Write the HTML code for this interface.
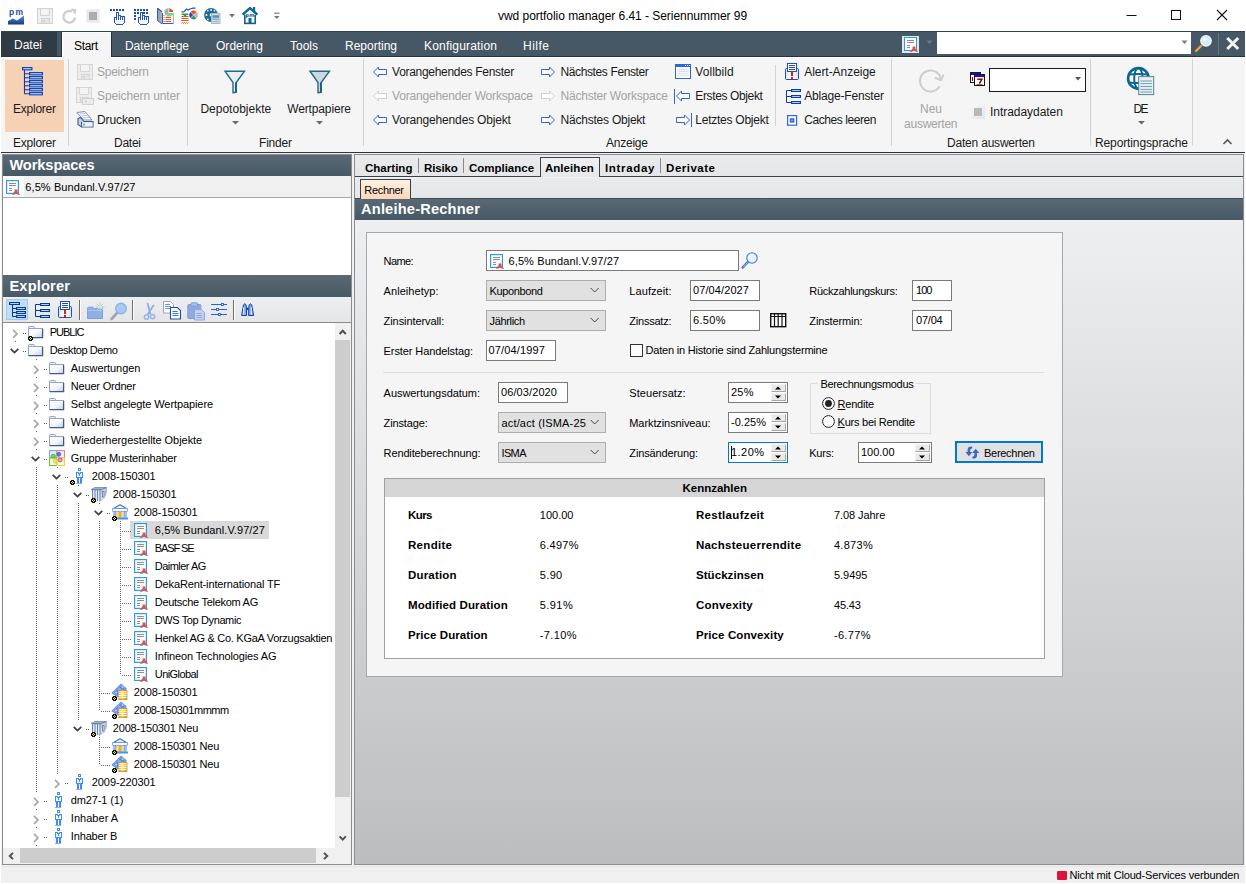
<!DOCTYPE html>
<html lang="de"><head><meta charset="utf-8"><title>vwd portfolio manager 6.41</title>
<style>
html,body{margin:0;padding:0}
body{width:1246px;height:884px;overflow:hidden;background:#f0f0f0;position:relative;
 font-family:"Liberation Sans",sans-serif;font-size:11px;color:#000}
.t{position:absolute;white-space:nowrap;display:block}
svg{display:block;overflow:visible}
</style></head>
<body>
<div id="titlebar"><div style="position:absolute;left:0px;top:0px;width:1246px;height:31px;background:#fff"></div><span class="t" style="left:498px;top:7.5px;height:16px;line-height:16px;font-size:12px;font-weight:400;color:#000;letter-spacing:-0.04px;">vwd portfolio manager 6.41 - Seriennummer 99</span><svg style="position:absolute;left:1125px;top:9px;" width="14" height="14" viewBox="0 0 14 14"><path d="M1.5 6.5h10" stroke="#111" stroke-width="1"/></svg><svg style="position:absolute;left:1170px;top:9px;" width="14" height="14" viewBox="0 0 14 14"><rect x="1.5" y="1.5" width="9" height="9" fill="none" stroke="#111" stroke-width="1"/></svg><svg style="position:absolute;left:1216px;top:9px;" width="14" height="14" viewBox="0 0 14 14"><path d="M1 1l10 10M11 1L1 11" stroke="#111" stroke-width="1.1"/></svg></div>
<div id="menubar"><div style="position:absolute;left:1px;top:31px;width:1244px;height:26px;background:#465866"></div><div style="position:absolute;left:1px;top:31px;width:56px;height:26px;background:#2f3b45"></div><div style="position:absolute;left:1px;top:31px;width:1244px;height:1px;background:#334450"></div><div style="position:absolute;left:1px;top:56px;width:1244px;height:1px;background:#25323a"></div><div style="position:absolute;left:61px;top:32px;width:1px;height:25px;background:#26323a"></div><div style="position:absolute;left:111px;top:32px;width:1px;height:25px;background:#26323a"></div><div style="position:absolute;left:62px;top:32px;width:49px;height:25px;background:#f5f5f5;border-top:1px solid #fff;border-left:1px solid #fff;box-sizing:border-box"></div><span class="t" style="left:14px;top:36.6px;height:16px;line-height:16px;font-size:12px;font-weight:400;color:#ffffff;letter-spacing:-0.00px;">Datei</span><span class="t" style="left:74px;top:38px;height:16px;line-height:16px;font-size:12px;font-weight:400;color:#000;letter-spacing:-0.34px;">Start</span><span class="t" style="left:125px;top:38px;height:16px;line-height:16px;font-size:12px;font-weight:400;color:#ffffff;letter-spacing:-0.07px;">Datenpflege</span><span class="t" style="left:216px;top:38px;height:16px;line-height:16px;font-size:12px;font-weight:400;color:#ffffff;letter-spacing:0.04px;">Ordering</span><span class="t" style="left:290px;top:38px;height:16px;line-height:16px;font-size:12px;font-weight:400;color:#ffffff;letter-spacing:-0.00px;">Tools</span><span class="t" style="left:345px;top:38px;height:16px;line-height:16px;font-size:12px;font-weight:400;color:#ffffff;letter-spacing:-0.00px;">Reporting</span><span class="t" style="left:424px;top:38px;height:16px;line-height:16px;font-size:12px;font-weight:400;color:#ffffff;letter-spacing:0.19px;">Konfiguration</span><span class="t" style="left:523px;top:38px;height:16px;line-height:16px;font-size:12px;font-weight:400;color:#ffffff;letter-spacing:0.50px;">Hilfe</span><div style="position:absolute;left:937px;top:32px;width:254px;height:22px;background:#fff"></div><svg style="position:absolute;left:1181px;top:40px;" width="8" height="5" viewBox="0 0 8 5"><path d="M0.5 0.5h6l-3 3.5z" fill="#7a7a7a"/></svg><svg style="position:absolute;left:926px;top:40px;" width="8" height="5" viewBox="0 0 8 5"><path d="M0.5 0.5h6l-3 3.5z" fill="#6d7a84"/></svg><div style="position:absolute;left:1218px;top:33px;width:1px;height:22px;background:#6a7780"></div><svg style="position:absolute;left:1225px;top:36px;" width="15" height="15" viewBox="0 0 15 15"><path d="M2.2 2l11 11M13.2 2L2.2 13" stroke="#f4f4f4" stroke-width="3"/></svg></div>
<div id="ribbon"><div style="position:absolute;left:1px;top:57px;width:1244px;height:95px;background:#f5f5f5"></div><div style="position:absolute;left:1px;top:57px;width:61px;height:1px;background:#fdfdfd"></div><div style="position:absolute;left:111px;top:57px;width:1134px;height:1px;background:#fdfdfd"></div><div style="position:absolute;left:1px;top:152px;width:1244px;height:1px;background:#2b3841"></div><div style="position:absolute;left:5px;top:60px;width:59px;height:72px;background:#f5d1b6"></div><div style="position:absolute;left:68px;top:59px;width:1px;height:87px;background:#d2d3d4"></div><div style="position:absolute;left:187px;top:59px;width:1px;height:87px;background:#d2d3d4"></div><div style="position:absolute;left:363px;top:59px;width:1px;height:87px;background:#d2d3d4"></div><div style="position:absolute;left:891px;top:59px;width:1px;height:87px;background:#d2d3d4"></div><div style="position:absolute;left:1090px;top:59px;width:1px;height:87px;background:#d2d3d4"></div><div style="position:absolute;left:1192px;top:59px;width:1px;height:87px;background:#d2d3d4"></div><div style="position:absolute;left:775px;top:65px;width:1px;height:61px;background:#d2d3d4"></div><span class="t" style="left:13px;top:134.8px;height:16px;line-height:16px;font-size:12px;font-weight:400;color:#1a1a1a;letter-spacing:-0.24px;">Explorer</span><span class="t" style="left:114px;top:134.8px;height:16px;line-height:16px;font-size:12px;font-weight:400;color:#1a1a1a;letter-spacing:-0.25px;">Datei</span><span class="t" style="left:259px;top:134.8px;height:16px;line-height:16px;font-size:12px;font-weight:400;color:#1a1a1a;letter-spacing:-0.20px;">Finder</span><span class="t" style="left:606px;top:134.8px;height:16px;line-height:16px;font-size:12px;font-weight:400;color:#1a1a1a;letter-spacing:-0.23px;">Anzeige</span><span class="t" style="left:947px;top:134.8px;height:16px;line-height:16px;font-size:12px;font-weight:400;color:#1a1a1a;letter-spacing:-0.20px;">Daten auswerten</span><span class="t" style="left:1095px;top:134.8px;height:16px;line-height:16px;font-size:12px;font-weight:400;color:#1a1a1a;letter-spacing:-0.12px;">Reportingsprache</span><span class="t" style="left:13px;top:100.7px;height:16px;line-height:16px;font-size:12px;font-weight:400;color:#1a1a1a;letter-spacing:-0.24px;">Explorer</span><span class="t" style="left:97px;top:63.6px;height:16px;line-height:16px;font-size:12px;font-weight:400;color:#a3a3a3;letter-spacing:-0.26px;">Speichern</span><span class="t" style="left:97px;top:87.6px;height:16px;line-height:16px;font-size:12px;font-weight:400;color:#a3a3a3;letter-spacing:-0.12px;">Speichern unter</span><span class="t" style="left:97px;top:111.6px;height:16px;line-height:16px;font-size:12px;font-weight:400;color:#1a1a1a;letter-spacing:-0.11px;">Drucken</span><span class="t" style="left:200.4px;top:100.5px;height:16px;line-height:16px;font-size:12px;font-weight:400;color:#1a1a1a;letter-spacing:0.01px;">Depotobjekte</span><span class="t" style="left:287.2px;top:100.5px;height:16px;line-height:16px;font-size:12px;font-weight:400;color:#1a1a1a;letter-spacing:-0.13px;">Wertpapiere</span><svg style="position:absolute;left:231.5px;top:121px;" width="7" height="4" viewBox="0 0 7 4"><path d="M0 0h7l-3.5 3.5z" fill="#6a6a6a"/></svg><svg style="position:absolute;left:315.5px;top:121px;" width="7" height="4" viewBox="0 0 7 4"><path d="M0 0h7l-3.5 3.5z" fill="#6a6a6a"/></svg><span class="t" style="left:392.1px;top:63.6px;height:16px;line-height:16px;font-size:12px;font-weight:400;color:#1a1a1a;letter-spacing:-0.30px;">Vorangehendes Fenster</span><span class="t" style="left:392.1px;top:87.6px;height:16px;line-height:16px;font-size:12px;font-weight:400;color:#a3a3a3;letter-spacing:-0.20px;">Vorangehender Workspace</span><span class="t" style="left:392.1px;top:111.6px;height:16px;line-height:16px;font-size:12px;font-weight:400;color:#1a1a1a;letter-spacing:-0.17px;">Vorangehendes Objekt</span><span class="t" style="left:560.5px;top:63.6px;height:16px;line-height:16px;font-size:12px;font-weight:400;color:#1a1a1a;letter-spacing:-0.38px;">Nächstes Fenster</span><span class="t" style="left:560.5px;top:87.6px;height:16px;line-height:16px;font-size:12px;font-weight:400;color:#a3a3a3;letter-spacing:-0.22px;">Nächster Workspace</span><span class="t" style="left:560.5px;top:111.6px;height:16px;line-height:16px;font-size:12px;font-weight:400;color:#1a1a1a;letter-spacing:-0.22px;">Nächstes Objekt</span><span class="t" style="left:695.3px;top:63.6px;height:16px;line-height:16px;font-size:12px;font-weight:400;color:#1a1a1a;letter-spacing:0.05px;">Vollbild</span><span class="t" style="left:695.3px;top:87.6px;height:16px;line-height:16px;font-size:12px;font-weight:400;color:#1a1a1a;letter-spacing:-0.37px;">Erstes Objekt</span><span class="t" style="left:695.3px;top:111.6px;height:16px;line-height:16px;font-size:12px;font-weight:400;color:#1a1a1a;letter-spacing:-0.25px;">Letztes Objekt</span><span class="t" style="left:804.2px;top:63.6px;height:16px;line-height:16px;font-size:12px;font-weight:400;color:#1a1a1a;letter-spacing:-0.04px;">Alert-Anzeige</span><span class="t" style="left:804.2px;top:87.6px;height:16px;line-height:16px;font-size:12px;font-weight:400;color:#1a1a1a;letter-spacing:-0.17px;">Ablage-Fenster</span><span class="t" style="left:804.2px;top:111.6px;height:16px;line-height:16px;font-size:12px;font-weight:400;color:#1a1a1a;letter-spacing:-0.43px;">Caches leeren</span><span class="t" style="left:920px;top:100.5px;height:16px;line-height:16px;font-size:12px;font-weight:400;color:#a3a3a3;letter-spacing:-0.01px;">Neu</span><span class="t" style="left:904px;top:115.5px;height:16px;line-height:16px;font-size:12px;font-weight:400;color:#a3a3a3;letter-spacing:-0.23px;">auswerten</span><div style="position:absolute;left:989px;top:68px;width:97px;height:24px;background:#fff;border:1px solid #1a1a1a;box-sizing:border-box"></div><svg style="position:absolute;left:1075px;top:77px;" width="7" height="4" viewBox="0 0 7 4"><path d="M0 0h6l-3 3.5z" fill="#555"/></svg><span class="t" style="left:990px;top:104px;height:16px;line-height:16px;font-size:12px;font-weight:400;color:#1a1a1a;letter-spacing:-0.04px;">Intradaydaten</span><span class="t" style="left:1133.5px;top:100.5px;height:16px;line-height:16px;font-size:12px;font-weight:400;color:#1a1a1a;letter-spacing:-1.67px;">DE</span><svg style="position:absolute;left:1138px;top:121px;" width="7" height="4" viewBox="0 0 7 4"><path d="M0 0h7l-3.5 3.5z" fill="#6a6a6a"/></svg><svg style="position:absolute;left:1222px;top:138px;" width="11" height="8" viewBox="0 0 11 8"><path d="M1.5 6L5.5 2l4 4" fill="none" stroke="#555" stroke-width="1.6"/></svg><svg style="position:absolute;left:22px;top:67px;" width="22" height="29" viewBox="0 0 22 29"><path d="M2.5 3V26.7M2.5 6.7H7.5M2.5 10.7H7.5M2.5 14.7H7.5M2.5 18.7H7.5M2.5 22.7H7.5M2.5 26.7H7.5" fill="none" stroke="#0b3bb0" stroke-width="1.1"/><rect x="0.5" y="0.5" width="9.5" height="2.4" fill="#3f8df0" stroke="#0b3bb0" stroke-width="0.9"/><rect x="1.5" y="1.3" width="7.5" height="0.8" fill="#b5dbff"/><rect x="7.5" y="5.5" width="13" height="2.4" fill="#3f8df0" stroke="#0b3bb0" stroke-width="0.9"/><rect x="8.5" y="6.3" width="11" height="0.8" fill="#b5dbff"/><rect x="7.5" y="9.5" width="13" height="2.4" fill="#3f8df0" stroke="#0b3bb0" stroke-width="0.9"/><rect x="8.5" y="10.3" width="11" height="0.8" fill="#b5dbff"/><rect x="7.5" y="13.5" width="13" height="2.4" fill="#3f8df0" stroke="#0b3bb0" stroke-width="0.9"/><rect x="8.5" y="14.3" width="11" height="0.8" fill="#b5dbff"/><rect x="7.5" y="17.5" width="13" height="2.4" fill="#3f8df0" stroke="#0b3bb0" stroke-width="0.9"/><rect x="8.5" y="18.3" width="11" height="0.8" fill="#b5dbff"/><rect x="7.5" y="21.5" width="13" height="2.4" fill="#3f8df0" stroke="#0b3bb0" stroke-width="0.9"/><rect x="8.5" y="22.3" width="11" height="0.8" fill="#b5dbff"/><rect x="7.5" y="25.5" width="13" height="2.4" fill="#3f8df0" stroke="#0b3bb0" stroke-width="0.9"/><rect x="8.5" y="26.3" width="11" height="0.8" fill="#b5dbff"/></svg><svg style="position:absolute;left:77px;top:64px;" width="17" height="17" viewBox="0 0 17 17"><g transform="translate(0 0)"><rect x="0.5" y="0.5" width="15" height="15" fill="#ededed" stroke="#d6d6d6"/>
<rect x="3.5" y="0.5" width="9" height="7" fill="#f4f4f4" stroke="#d6d6d6"/>
<rect x="4.5" y="10.5" width="8" height="5" fill="#e6e6e6" stroke="#d6d6d6"/><rect x="6" y="12" width="2" height="2.5" fill="#d6d6d6"/></g></svg><svg style="position:absolute;left:76px;top:87px;" width="19" height="19" viewBox="0 0 19 19"><g transform="translate(0 0)"><rect x="0.5" y="0.5" width="15" height="15" fill="#ededed" stroke="#d6d6d6"/>
<rect x="3.5" y="0.5" width="9" height="7" fill="#f4f4f4" stroke="#d6d6d6"/>
<rect x="4.5" y="10.5" width="8" height="5" fill="#e6e6e6" stroke="#d6d6d6"/><rect x="6" y="12" width="2" height="2.5" fill="#d6d6d6"/></g><rect x="6.5" y="11.5" width="11" height="6" fill="#ececec" stroke="#d0d0d0"/><rect x="9" y="13.5" width="2" height="2" fill="#d0d0d0"/></svg><svg style="position:absolute;left:76px;top:111px;" width="19" height="18" viewBox="0 0 19 18">
<path d="M1 1.5L9 0.5L16 9H7.5z" fill="#fff" stroke="#7b8fb8" stroke-width="1"/>
<path d="M4 3L9.5 2.4M5.5 5L11.5 4.4M7 7L13 6.4" stroke="#b7c3dc" stroke-width="1"/>
<path d="M2 7.5L4.5 6.5L8 10.5H17v5.5H5.5L2 13.5z" fill="#c7d3e8" stroke="#3d5c9a" stroke-width="1.1"/>
<path d="M5.5 10.8V16" stroke="#3d5c9a" stroke-width="1"/>
<rect x="6.5" y="11.5" width="10" height="4" fill="#eef3fb"/>
<rect x="7.5" y="12.5" width="1.2" height="2" fill="#2aa000"/></svg><svg style="position:absolute;left:223px;top:69.5px;" width="24" height="25" viewBox="0 0 24 25">
<path d="M2 1.2H21.5L13.2 12.5V22.3L10 22.8V12.5z" fill="#e9eef2" stroke="#1e6a92" stroke-width="1.4" stroke-linejoin="miter"/>
<path d="M12.9 12.5V22.3" stroke="#1e5f86" stroke-width="1.8"/></svg><svg style="position:absolute;left:307.5px;top:69.5px;" width="24" height="25" viewBox="0 0 24 25">
<path d="M2 1.2H21.5L13.2 12.5V22.3L10 22.8V12.5z" fill="#d3d6da" stroke="#1e6a92" stroke-width="1.4" stroke-linejoin="miter"/>
<path d="M12.9 12.5V22.3" stroke="#1e5f86" stroke-width="1.8"/></svg><svg style="position:absolute;left:373px;top:66px;" width="14" height="12" viewBox="0 0 14 12"><path d="M0.5 6L5.5 1V3.5H13.5V8.5H5.5V11z" fill="#fff" stroke="#2f66d8" stroke-width="1" stroke-linejoin="miter"/></svg><svg style="position:absolute;left:373px;top:90px;" width="14" height="12" viewBox="0 0 14 12"><path d="M0.5 6L5.5 1V3.5H13.5V8.5H5.5V11z" fill="#fff" stroke="#cfcfcf" stroke-width="1" stroke-linejoin="miter"/></svg><svg style="position:absolute;left:373px;top:114px;" width="14" height="12" viewBox="0 0 14 12"><path d="M0.5 6L5.5 1V3.5H13.5V8.5H5.5V11z" fill="#fff" stroke="#2f66d8" stroke-width="1" stroke-linejoin="miter"/></svg><svg style="position:absolute;left:541px;top:66px;" width="14" height="12" viewBox="0 0 14 12"><path d="M13.5 6L8.5 1V3.5H0.5V8.5H8.5V11z" fill="#fff" stroke="#2f66d8" stroke-width="1" stroke-linejoin="miter"/></svg><svg style="position:absolute;left:541px;top:90px;" width="14" height="12" viewBox="0 0 14 12"><path d="M13.5 6L8.5 1V3.5H0.5V8.5H8.5V11z" fill="#fff" stroke="#cfcfcf" stroke-width="1" stroke-linejoin="miter"/></svg><svg style="position:absolute;left:541px;top:114px;" width="14" height="12" viewBox="0 0 14 12"><path d="M13.5 6L8.5 1V3.5H0.5V8.5H8.5V11z" fill="#fff" stroke="#2f66d8" stroke-width="1" stroke-linejoin="miter"/></svg><svg style="position:absolute;left:674px;top:64px;" width="18" height="16" viewBox="0 0 18 16">
<rect x="1.5" y="0.5" width="15" height="14" fill="#fdfdff" stroke="#2f66d8" stroke-width="1"/>
<rect x="1.5" y="0.5" width="15" height="2.5" fill="#2f66d8"/>
<path d="M3.5 5.5h11M3.5 7.5h11M3.5 9.5h11M3.5 11.5h11" stroke="#d5def6" stroke-width="1"/>
<path d="M11 1.5h1M13 1.5h1M15 1.5h1" stroke="#e8eeff" stroke-width="1"/></svg><div style="position:absolute;left:674px;top:89px;width:1px;height:15px;background:#2f66d8"></div><svg style="position:absolute;left:676px;top:90px;" width="14" height="12" viewBox="0 0 14 12"><path d="M0.5 6L5.5 1V3.5H13.5V8.5H5.5V11z" fill="#fff" stroke="#2f66d8" stroke-width="1" stroke-linejoin="miter"/></svg><svg style="position:absolute;left:676px;top:114px;" width="14" height="12" viewBox="0 0 14 12"><path d="M13.5 6L8.5 1V3.5H0.5V8.5H8.5V11z" fill="#fff" stroke="#2f66d8" stroke-width="1" stroke-linejoin="miter"/></svg><div style="position:absolute;left:691px;top:113px;width:1px;height:14px;background:#2f66d8"></div><svg style="position:absolute;left:785px;top:63px;" width="14" height="17" viewBox="0 0 14 17">
<rect x="0.5" y="5.5" width="13" height="11" rx="1" fill="#dfe8f8" stroke="#1f4fae" stroke-width="1"/>
<rect x="2.5" y="0.5" width="9" height="8" fill="#fff" stroke="#1f4fae" stroke-width="1"/>
<path d="M4 2.5h6M4 4.5h6M4 6.5h6" stroke="#1f4fae" stroke-width="1"/>
<rect x="3" y="9" width="8" height="7" fill="#f7f7f7"/>
<rect x="6" y="9" width="2" height="4" fill="#f01414"/><rect x="6" y="14" width="2" height="2" fill="#f01414"/></svg><svg style="position:absolute;left:786px;top:89px;" width="15" height="15" viewBox="0 0 15 15"><path d="M5 1.5H0.5V13.5H5M0.5 7.5H5" fill="none" stroke="#0b3bb0" stroke-width="1"/><rect x="5.5" y="0.5" width="9" height="2" fill="#5a9ff2" stroke="#0b3bb0" stroke-width="1"/><rect x="6.5" y="1.1" width="7" height="0.8" fill="#c2e0ff"/><rect x="5.5" y="6.5" width="9" height="2" fill="#5a9ff2" stroke="#0b3bb0" stroke-width="1"/><rect x="6.5" y="7.1" width="7" height="0.8" fill="#c2e0ff"/><rect x="5.5" y="12.5" width="9" height="2" fill="#5a9ff2" stroke="#0b3bb0" stroke-width="1"/><rect x="6.5" y="13.1" width="7" height="0.8" fill="#c2e0ff"/></svg><svg style="position:absolute;left:786px;top:114px;" width="12" height="13" viewBox="0 0 12 13"><rect x="1.6" y="1.6" width="9" height="9.6" fill="#fff" stroke="#2f66d8" stroke-width="1.2"/><rect x="3.8" y="4.2" width="4.6" height="4.4" fill="#2f66d8"/><rect x="5" y="5.6" width="2.2" height="1.2" fill="#8fb0f0"/></svg><svg style="position:absolute;left:918px;top:69px;" width="28" height="26" viewBox="0 0 28 26">
<path d="M21.6 17.25A10.5 10.5 0 1 1 23 11.1" fill="none" stroke="#cdcdcd" stroke-width="2"/>
<path d="M16.8 8.6L23 11.1L25.6 5.3" fill="none" stroke="#cdcdcd" stroke-width="2"/></svg><svg style="position:absolute;left:970px;top:72px;" width="17" height="15" viewBox="0 0 17 15">
<rect x="0.5" y="0.5" width="10" height="10" fill="#fff" stroke="#111"/><rect x="0.5" y="0.5" width="10" height="2.5" fill="#1a1a8c"/>
<rect x="4.5" y="2.5" width="10" height="11" fill="#fff" stroke="#111"/><rect x="4.5" y="2.5" width="10" height="2.6" fill="#1a1a8c"/>
<path d="M7.3 7.3h4.6l-2.6 4.2" fill="none" stroke="#a00000" stroke-width="1.5"/><path d="M6.5 12.5h6" stroke="#555" stroke-width="0.8"/>
<path d="M2.5 5v4" stroke="#a00000" stroke-width="1.2"/></svg><div style="position:absolute;left:971px;top:105px;width:14px;height:14px;background:linear-gradient(135deg,#f7f8fb,#e2e5ee)"></div><div style="position:absolute;left:974px;top:108px;width:8px;height:8px;background:#b9b9b9"></div><svg style="position:absolute;left:1126px;top:66px;" width="30" height="30" viewBox="0 0 30 30">
<circle cx="12.4" cy="12.4" r="10.3" fill="#fff" stroke="#0b6693" stroke-width="2.6"/>
<ellipse cx="12.4" cy="12.4" rx="4.2" ry="10.3" fill="none" stroke="#0b6693" stroke-width="2"/>
<path d="M3 8.6Q12.4 7.4 21.8 8.6M3 16.4Q12.4 17.6 21.8 16.4" fill="none" stroke="#0b6693" stroke-width="2"/>
<rect x="12.7" y="10.6" width="15" height="18" fill="#e9eeee" stroke="#5a8096" stroke-width="1"/>
<path d="M14.5 15h11.5M14.5 26h11.5" stroke="#a9c6d4" stroke-width="1.8"/>
<path d="M14.5 17.6h11.5M14.5 20.5h11.5M14.5 23.4h11.5" stroke="#6f9fb8" stroke-width="1"/></svg><div style="position:absolute;left:902px;top:36px;width:17px;height:17px;background:#dfe6ec"></div><svg style="position:absolute;left:904px;top:37px;" width="15" height="16" viewBox="0 0 15 16">
<rect x="0.5" y="0.5" width="12" height="13" fill="#fbfcfe" stroke="#2f9bd8"/>
<path d="M3 3.5h7M3 5.5h7M3 8.5h3M3 10.5h3" stroke="#8f8f8f"/>
<path d="M8.6 9.6h2.8v2l2.8 3.2h-2.4l-1.8-2-1.8 2H5.8l2.8-3.2z" fill="#d9534f"/></svg><svg style="position:absolute;left:1194px;top:34px;" width="20" height="20" viewBox="0 0 20 20">
<path d="M7 12L2 17" stroke="#eda23c" stroke-width="2.4" stroke-linecap="round"/>
<circle cx="12" cy="6.8" r="5.2" fill="#d4ecff" stroke="#eef4fa" stroke-width="1.4"/>
<circle cx="10.6" cy="5.4" r="1.8" fill="#fff"/></svg></div>
<div id="title-icons"><span class="t" style="left:9px;top:7px;height:10px;line-height:10px;font-size:8.5px;font-weight:700;color:#1c4e9c;letter-spacing:1.25px;">pm</span><svg style="position:absolute;left:8px;top:15px;" width="17" height="10" viewBox="0 0 17 10"><defs><linearGradient id="pmg" x1="0" y1="0" x2="0" y2="1"><stop offset="0" stop-color="#5d8fd4"/><stop offset="1" stop-color="#0d3a8a"/></linearGradient></defs><path d="M0 9.5V6L5 3.5L9 5.5L16 0.5V9.5z" fill="url(#pmg)"/></svg><svg style="position:absolute;left:37px;top:8px;" width="17" height="17" viewBox="0 0 17 17"><g transform="translate(0 0)"><rect x="0.5" y="0.5" width="15" height="15" fill="#f0f0f0" stroke="#d2d2d2"/>
<rect x="3.5" y="0.5" width="9" height="7" fill="#f4f4f4" stroke="#d2d2d2"/>
<rect x="4.5" y="10.5" width="8" height="5" fill="#e6e6e6" stroke="#d2d2d2"/><rect x="6" y="12" width="2" height="2.5" fill="#d2d2d2"/></g></svg><svg style="position:absolute;left:61px;top:8px;" width="17" height="17" viewBox="0 0 17 17">
<path d="M14 9.5A5.8 5.8 0 1 1 10.8 3.6" fill="none" stroke="#cfcfcf" stroke-width="2.4"/>
<path d="M9.5 0.5L15.5 1L14.5 7z" fill="#cfcfcf"/></svg><div style="position:absolute;left:86px;top:9px;width:14px;height:14px;background:#e8e9f0;border:1px solid #f1f2f7;box-sizing:border-box"></div><div style="position:absolute;left:89px;top:12px;width:8px;height:8px;background:#adadad"></div><svg style="position:absolute;left:110px;top:8px;shape-rendering:crispEdges" width="16" height="18" viewBox="0 0 16 18"><rect x="0" y="1" width="2" height="2" fill="#1b4fa8"/><rect x="3" y="1" width="2" height="2" fill="#1b4fa8"/><rect x="6" y="1" width="2" height="2" fill="#1b4fa8"/><rect x="9" y="1" width="2" height="2" fill="#1b4fa8"/><rect x="12" y="1" width="2" height="2" fill="#1b4fa8"/><g transform="translate(6 4)"><path d="M0.5 8V0.5H2.5V3.5H4.5V4.5H6.5V4.5H8.5V10.5L6.5 12.5H0.5L-1.5 10.5V5.5H0.5" fill="#f3f6fb" stroke="#2458b0" stroke-width="1" stroke-linejoin="miter"/><path d="M2.5 3.5V7.5M4.5 4.5V7.5M6.5 4.5V7.5" stroke="#2458b0" stroke-width="1"/></g></svg><svg style="position:absolute;left:134px;top:8px;shape-rendering:crispEdges" width="16" height="18" viewBox="0 0 16 18"><rect x="0" y="1" width="2" height="2" fill="#1b4fa8"/><rect x="3" y="1" width="2" height="2" fill="#1b4fa8"/><rect x="6" y="1" width="2" height="2" fill="#1b4fa8"/><rect x="9" y="1" width="2" height="2" fill="#1b4fa8"/><rect x="12" y="1" width="2" height="2" fill="#1b4fa8"/><rect x="0" y="4" width="2" height="2" fill="#1b4fa8"/><rect x="3" y="4" width="2" height="2" fill="#1b4fa8"/><rect x="9" y="4" width="2" height="2" fill="#1b4fa8"/><rect x="12" y="4" width="2" height="2" fill="#1b4fa8"/><rect x="0" y="7" width="2" height="2" fill="#1b4fa8"/><rect x="0" y="10" width="2" height="2" fill="#1b4fa8"/><g transform="translate(6 4)"><path d="M0.5 8V0.5H2.5V3.5H4.5V4.5H6.5V4.5H8.5V10.5L6.5 12.5H0.5L-1.5 10.5V5.5H0.5" fill="#f3f6fb" stroke="#2458b0" stroke-width="1" stroke-linejoin="miter"/><path d="M2.5 3.5V7.5M4.5 4.5V7.5M6.5 4.5V7.5" stroke="#2458b0" stroke-width="1"/></g></svg><svg style="position:absolute;left:157px;top:7px;" width="17" height="18" viewBox="0 0 17 18">
<defs><linearGradient id="rpg" x1="0" y1="0" x2="1" y2="0"><stop offset="0" stop-color="#8f9aa6"/><stop offset="1" stop-color="#b4b4b0"/></linearGradient></defs>
<path d="M0.5 1.2L5 4.8V17L0.5 13.6z" fill="url(#rpg)"/>
<path d="M0.5 1.2V13.6L5 17" fill="none" stroke="#2a5fd0" stroke-width="1"/>
<path d="M0.5 1.2L5 4.8" stroke="#2a5fd0" stroke-width="1.2"/>
<rect x="5" y="5" width="11" height="12" fill="#fff"/>
<path d="M5.5 6V16.5H16" fill="none" stroke="#2a5fd0" stroke-width="1"/>
<path d="M16.3 6V17" stroke="#9a9a9a" stroke-width="0.9"/>
<path d="M8.5 10.5h5.5M8.5 12.5h5.5M8.5 14.5h5.5" stroke="#e8551c" stroke-width="1.2"/>
<path d="M6.5 8.5h1M6.5 10.5h1M6.5 12.5h1M6.5 14.5h1" stroke="#e8551c" stroke-width="1"/>
<path d="M7.5 3L11.5 0.8V6.5L8.5 8.5L7.5 6z" fill="#a9aea8"/>
<path d="M12.3 1L16 3.5V5H12.3z" fill="#e8481c"/>
<path d="M11 6L16 5.8V7.5L13.5 9.5H9z" fill="#6fd898"/></svg><svg style="position:absolute;left:181px;top:7px;" width="18" height="18" viewBox="0 0 18 18">
<path d="M0.5 5.2L3 4.6L5.5 2L7 3L9 2L12 1.2H14.5" fill="none" stroke="#2352c8" stroke-width="1.2"/>
<path d="M0.5 7.5h7M0.5 9.5h7M0.5 11.5h7M0.5 13.5h7" stroke="#e8551c" stroke-width="1.1"/>
<path d="M0.7 6.5H7.2L4 10z" fill="#2aa34a"/>
<path d="M0.5 16.5l1-1.2 1 1.2 1-1.2 1 1.2 1-1.2 1 1.2 0.8-1" fill="none" stroke="#e8551c" stroke-width="0.9"/>
<circle cx="12.6" cy="8" r="4.3" fill="#b9b9b9"/>
<path d="M12.6 8L9.6 4.9A4.3 4.3 0 0 1 15.6 4.9z" fill="#e8501c"/>
<path d="M12.6 8L9.6 11.1A4.3 4.3 0 0 0 15.6 11.1z" fill="#2aa05a"/>
<path d="M12.6 8L9.6 4.9A4.3 4.3 0 0 0 9.6 11.1z" fill="#3a3ad8"/>
<path d="M9.8 5.1L15.4 10.9M15.4 5.1L9.8 10.9" stroke="#f4f4f4" stroke-width="0.7"/></svg><svg style="position:absolute;left:204px;top:7px;" width="17" height="18" viewBox="0 0 17 18">
<circle cx="7" cy="8" r="6.9" fill="#1e6a92"/>
<g fill="#eaf2f6"><rect x="3" y="3" width="1.6" height="1.6" rx="0.5"/><rect x="6.2" y="2" width="1.8" height="1.8" rx="0.5"/><rect x="9.6" y="3" width="1.6" height="1.6" rx="0.5"/>
<rect x="1.6" y="7" width="1.8" height="2" rx="0.5"/><rect x="5.8" y="6.6" width="2.4" height="2.6" rx="0.5"/>
<rect x="3" y="11.6" width="1.6" height="1.6" rx="0.5"/></g>
<rect x="7.5" y="6.5" width="8.5" height="10" fill="#cfdde6" stroke="#a7bdca" stroke-width="1"/>
<path d="M8.5 8.8h6.5M8.5 10h6.5" stroke="#5f8fae" stroke-width="1.3"/>
<path d="M8.5 12.2h6.5" stroke="#7ba3bd" stroke-width="1.2"/>
<path d="M8.5 14.6h6.5" stroke="#9fbccd" stroke-width="1.1"/></svg><svg style="position:absolute;left:229px;top:14px;" width="6" height="4" viewBox="0 0 6 4"><path d="M0 0h6L3 3.5z" fill="#777"/></svg><svg style="position:absolute;left:241px;top:6px;" width="18" height="19" viewBox="0 0 18 19">
<rect x="3.8" y="8" width="10.4" height="9.4" fill="#fff" stroke="#0b6693" stroke-width="1.6"/>
<path d="M9 2.8L2.5 8.8H15.5z" fill="#fff"/>
<path d="M1.6 8.6L9 2L16.4 8.6" fill="none" stroke="#0b6693" stroke-width="2.4" stroke-linejoin="miter"/>
<rect x="12" y="1" width="2.2" height="4.5" fill="#0b6693"/>
<rect x="7.5" y="12" width="3" height="5.6" fill="#0b6693"/>
<path d="M5.3 12V8.8H7.2V10.6H5.3M9 11V8.8H12.8V11M10.9 8.8V11" fill="none" stroke="#0b6693" stroke-width="0.9"/></svg><svg style="position:absolute;left:274px;top:12px;" width="6" height="8" viewBox="0 0 6 8"><path d="M0 1.2h5.6" stroke="#777" stroke-width="1.1"/><path d="M0 4h5.6L2.8 7z" fill="#777"/></svg></div>
<div id="explorer-panel"><div style="position:absolute;left:2px;top:154px;width:350px;height:711px;background:#fff;border:1px solid #8c8c8c;box-sizing:border-box"></div><div style="position:absolute;left:3px;top:155px;width:348px;height:21px;background:linear-gradient(#5a6975,#475966)"></div><span class="t" style="left:9.4px;top:155px;height:20px;line-height:20px;font-size:14.67px;font-weight:700;color:#fff;letter-spacing:-0.10px;">Workspaces</span><div style="position:absolute;left:3px;top:176px;width:348px;height:21px;background:#f0f0f0"></div><div style="position:absolute;left:3px;top:176px;width:21px;height:21px;background:#fbfbfb"></div><div style="position:absolute;left:3px;top:197px;width:348px;height:1px;background:#a8a8a8"></div><svg style="position:absolute;left:6px;top:180px;" width="15" height="16" viewBox="0 0 15 16">
<rect x="0.5" y="0.5" width="12" height="13" fill="#fbfcfe" stroke="#2f9bd8" stroke-width="1"/>
<rect x="1.5" y="1.5" width="10" height="11" fill="none" stroke="#d6eaf8" stroke-width="1"/>
<path d="M3 3.5h7M3 5.5h7M3 8.5h3M3 10.5h3" stroke="#8f8f8f" stroke-width="1"/>
<path d="M8.6 9.6h2.8v2l2.8 3.2h-2.4l-1.8-2-1.8 2H5.8l2.8-3.2z" fill="#d9534f"/></svg><span class="t" style="left:25.3px;top:179px;height:16px;line-height:16px;font-size:11px;font-weight:400;color:#000;letter-spacing:0.09px;">6,5% Bundanl.V.97/27</span><div style="position:absolute;left:3px;top:275px;width:348px;height:22px;background:linear-gradient(#5a6975,#475966)"></div><span class="t" style="left:9.4px;top:276px;height:20px;line-height:20px;font-size:14.67px;font-weight:700;color:#fff;letter-spacing:0.16px;">Explorer</span><div style="position:absolute;left:3px;top:297px;width:348px;height:25px;background:linear-gradient(#edeff0,#e3e5e7)"></div><div style="position:absolute;left:3px;top:322px;width:348px;height:1px;background:#8c8c8c"></div><div style="position:absolute;left:6px;top:299px;width:22px;height:21px;background:#c2dcf3;border:1px solid #98cbf5;box-sizing:border-box"></div><div style="position:absolute;left:79px;top:300px;width:1px;height:20px;background:#6e6e6e"></div><div style="position:absolute;left:80px;top:300px;width:1px;height:20px;background:#fff"></div><div style="position:absolute;left:132px;top:300px;width:1px;height:20px;background:#6e6e6e"></div><div style="position:absolute;left:133px;top:300px;width:1px;height:20px;background:#fff"></div><div style="position:absolute;left:233px;top:300px;width:1px;height:20px;background:#6e6e6e"></div><div style="position:absolute;left:234px;top:300px;width:1px;height:20px;background:#fff"></div><svg style="position:absolute;left:9px;top:302px;" width="17" height="17" viewBox="0 0 17 17"><path d="M3.5 3V14.5H7.5M3.5 6.5H7.5M3.5 10.5H7.5" fill="none" stroke="#0b3a8f" stroke-width="1"/><rect x="0.5" y="0.5" width="10" height="2" fill="#5a9ff2" stroke="#0b3a8f" stroke-width="1"/><rect x="1.5" y="1.1" width="8" height="0.8" fill="#c2e0ff"/><rect x="7.5" y="5.5" width="9" height="2" fill="#5a9ff2" stroke="#0b3a8f" stroke-width="1"/><rect x="8.5" y="6.1" width="7" height="0.8" fill="#c2e0ff"/><rect x="7.5" y="9.5" width="9" height="2" fill="#5a9ff2" stroke="#0b3a8f" stroke-width="1"/><rect x="8.5" y="10.1" width="7" height="0.8" fill="#c2e0ff"/><rect x="7.5" y="13.5" width="9" height="2" fill="#5a9ff2" stroke="#0b3a8f" stroke-width="1"/><rect x="8.5" y="14.1" width="7" height="0.8" fill="#c2e0ff"/></svg><svg style="position:absolute;left:35px;top:303px;" width="15" height="16" viewBox="0 0 15 16"><path d="M5 1.5H0.5V13.5H5M0.5 7.5H5" fill="none" stroke="#0b3a8f" stroke-width="1"/><rect x="5.5" y="0.5" width="9" height="2" fill="#5a9ff2" stroke="#0b3a8f" stroke-width="1"/><rect x="6.5" y="1.1" width="7" height="0.8" fill="#c2e0ff"/><rect x="5.5" y="6.5" width="9" height="2" fill="#5a9ff2" stroke="#0b3a8f" stroke-width="1"/><rect x="6.5" y="7.1" width="7" height="0.8" fill="#c2e0ff"/><rect x="5.5" y="12.5" width="9" height="2" fill="#5a9ff2" stroke="#0b3a8f" stroke-width="1"/><rect x="6.5" y="13.1" width="7" height="0.8" fill="#c2e0ff"/></svg><svg style="position:absolute;left:58px;top:301px;" width="14" height="17" viewBox="0 0 14 17">
<rect x="0.5" y="5.5" width="13" height="11" rx="1" fill="#dfe8f8" stroke="#1f4fae" stroke-width="1"/>
<rect x="2.5" y="0.5" width="9" height="8" fill="#fff" stroke="#1f4fae" stroke-width="1"/>
<path d="M4 2.5h6M4 4.5h6M4 6.5h6" stroke="#1f4fae" stroke-width="1"/>
<rect x="3" y="9" width="8" height="7" fill="#f7f7f7"/>
<rect x="6" y="9" width="2" height="4" fill="#f01414"/><rect x="6" y="14" width="2" height="2" fill="#f01414"/></svg><svg style="position:absolute;left:87px;top:302px;" width="18" height="18" viewBox="0 0 18 18">
<path d="M0.5 6.5Q0.5 5.2 1.8 5.2H6l1.4 1.4H15.5V16.5H0.5z" fill="#8fb0e6" stroke="#7ea0dc"/>
<path d="M0.8 8.5H15.2" stroke="#a9c3ee" stroke-width="1"/>
<path d="M13 0.5V9.5M8.5 5H17.5M9.8 1.8L16.2 8.2M16.2 1.8L9.8 8.2" stroke="#a9cfc6" stroke-width="1"/>
<path d="M13 3V7M11 5H15" stroke="#dff0ea" stroke-width="1"/></svg><svg style="position:absolute;left:110px;top:302px;" width="18" height="19" viewBox="0 0 18 19">
<path d="M7.5 10.5L1.5 17" stroke="#a0a4b4" stroke-width="2.6" stroke-linecap="round"/>
<circle cx="11" cy="6.5" r="5.3" fill="#a9c8f3" stroke="#8eb2ea" stroke-width="1.4"/></svg><svg style="position:absolute;left:142px;top:302px;" width="16" height="19" viewBox="0 0 16 19">
<path d="M5.5 1L8.5 12.5M11.8 3L5.5 12.5" stroke="#8eaae6" stroke-width="1.7"/>
<circle cx="4.6" cy="15" r="2.2" fill="none" stroke="#9ab3ea" stroke-width="1.5"/>
<circle cx="10.6" cy="14.6" r="2.2" fill="none" stroke="#9ab3ea" stroke-width="1.5"/></svg><svg style="position:absolute;left:163px;top:301px;" width="19" height="19" viewBox="0 0 19 19">
<path d="M0.5 0.5h7l3 3v8.5h-10z" fill="#fff" stroke="#9aa6c0"/>
<path d="M2 3.5h5M2 5.5h6M2 7.5h6" stroke="#6f8fd6" stroke-width="1"/>
<path d="M7.5 6.5h7l3 3v8.5h-10z" fill="#fff" stroke="#1f4fae" stroke-width="1.1"/>
<path d="M9.5 10.5h5M9.5 12.5h6M9.5 14.5h6" stroke="#3c72d8" stroke-width="1"/></svg><svg style="position:absolute;left:187px;top:302px;" width="19" height="19" viewBox="0 0 19 19">
<rect x="0.8" y="2.5" width="13" height="14" rx="1" fill="#8fa8e0" stroke="#7f98d6"/>
<rect x="4" y="0.8" width="6.5" height="3.4" rx="1" fill="#a9bdea" stroke="#7f98d6"/>
<path d="M7.5 7.5h7l3 3v7.5h-10z" fill="#c5d3f2" stroke="#90a6de"/>
<path d="M9.5 11.5h5M9.5 13.5h6M9.5 15.5h6" stroke="#8da6e2" stroke-width="1"/></svg><svg style="position:absolute;left:211px;top:302px;" width="17" height="16" viewBox="0 0 17 16">
<path d="M0 2.5h16M0 7.5h16M0 12.5h16" stroke="#2a62d4" stroke-width="1"/>
<rect x="10.5" y="1.5" width="2" height="2" fill="#fff" stroke="#2a62d4" stroke-width="0.9"/>
<rect x="5.5" y="6.5" width="2" height="2" fill="#fff" stroke="#2a62d4" stroke-width="0.9"/>
<rect x="7.5" y="11.5" width="2" height="2" fill="#fff" stroke="#2a62d4" stroke-width="0.9"/></svg><svg style="position:absolute;left:241px;top:303px;" width="14" height="14" viewBox="0 0 14 14">
<path d="M0.6 12.5L2 4.5Q2.2 0.8 3.8 0.8Q5.3 0.8 5.4 4.5L5.6 12.5z" fill="#7db0f2" stroke="#1c3fa0" stroke-width="1"/>
<path d="M7.6 12.5L7.8 4.5Q7.9 0.8 9.4 0.8Q11 0.8 11.2 4.5L12.6 12.5z" fill="#7db0f2" stroke="#1c3fa0" stroke-width="1"/>
<path d="M2.6 4.5v7M10.4 4.5v7" stroke="#e4f0ff" stroke-width="1.1"/>
<rect x="5.6" y="4.5" width="2" height="2.6" fill="#1c3fa0"/></svg><div style="position:absolute;left:130px;top:521px;width:139px;height:18px;background:#d9d9d9"></div><div style="position:absolute;left:15px;top:341px;width:1px;height:1px;background:repeating-linear-gradient(to bottom,#6a6a6a 0 1px,transparent 1px 2px)"></div><div style="position:absolute;left:36px;top:359px;width:1px;height:487px;background:repeating-linear-gradient(to bottom,#6a6a6a 0 1px,transparent 1px 2px)"></div><div style="position:absolute;left:57px;top:467px;width:1px;height:309px;background:repeating-linear-gradient(to bottom,#6a6a6a 0 1px,transparent 1px 2px)"></div><div style="position:absolute;left:78px;top:485px;width:1px;height:238px;background:repeating-linear-gradient(to bottom,#6a6a6a 0 1px,transparent 1px 2px)"></div><div style="position:absolute;left:99px;top:503px;width:1px;height:208px;background:repeating-linear-gradient(to bottom,#6a6a6a 0 1px,transparent 1px 2px)"></div><div style="position:absolute;left:120px;top:521px;width:1px;height:154px;background:repeating-linear-gradient(to bottom,#6a6a6a 0 1px,transparent 1px 2px)"></div><div style="position:absolute;left:99px;top:737px;width:1px;height:28px;background:repeating-linear-gradient(to bottom,#6a6a6a 0 1px,transparent 1px 2px)"></div><div style="position:absolute;left:9px;top:325px;width:13px;height:16px;background:#fff"></div><svg style="position:absolute;left:12px;top:328.5px;" width="7" height="10" viewBox="0 0 7 10"><path d="M1 0.9L5 4.9L1 8.9" fill="none" stroke="#a6a6a6" stroke-width="1.6"/></svg><div style="position:absolute;left:23px;top:333px;width:1px;height:1px;background:#5a5a5a"></div><div style="position:absolute;left:25px;top:333px;width:1px;height:1px;background:#5a5a5a"></div><svg style="position:absolute;left:28px;top:326px;" width="16" height="13" viewBox="0 0 16 13">
<defs><linearGradient id="fg" x1="0" y1="0" x2="1" y2="1"><stop offset="0" stop-color="#ffffff"/><stop offset="0.55" stop-color="#f4f6fa"/><stop offset="1" stop-color="#c3cddd"/></linearGradient></defs>
<path d="M0.5 2.5V1.3Q0.5 0.5 1.3 0.5H5.6Q6.4 0.5 6.5 1.3V2.5" fill="#eef2f8" stroke="#8ea5c4"/>
<rect x="0.5" y="2.5" width="14" height="9" fill="url(#fg)" stroke="#8ea5c4"/>
<path d="M14.6 3v9M0.8 11.7H15.2" stroke="#3d5c88" stroke-width="1.3" fill="none"/></svg><svg style="position:absolute;left:28px;top:336px;shape-rendering:crispEdges" width="5" height="5" viewBox="0 0 5 5">
<path d="M1 0h3v1h1v3h-1v1h-3v-1h-1v-3h1z" fill="#0a0a0a"/>
<path d="M2 1h1v1h1v1h-1v1h-1v-1h-1v-1h1z" fill="#f5ea00"/>
<rect x="2" y="2" width="1" height="1" fill="#2020a0"/></svg><span class="t" style="left:49.8px;top:324px;height:16px;line-height:16px;font-size:11px;font-weight:400;color:#000;letter-spacing:-1.03px;">PUBLIC</span><div style="position:absolute;left:9px;top:343px;width:13px;height:16px;background:#fff"></div><svg style="position:absolute;left:10px;top:348.3px;" width="9" height="6" viewBox="0 0 9 6"><path d="M0.7 0.9L4.5 4.6L8.3 0.9" fill="none" stroke="#404040" stroke-width="1.7"/></svg><div style="position:absolute;left:23px;top:351px;width:1px;height:1px;background:#5a5a5a"></div><div style="position:absolute;left:25px;top:351px;width:1px;height:1px;background:#5a5a5a"></div><svg style="position:absolute;left:28px;top:344px;" width="16" height="13" viewBox="0 0 16 13">
<defs><linearGradient id="fg" x1="0" y1="0" x2="1" y2="1"><stop offset="0" stop-color="#ffffff"/><stop offset="0.55" stop-color="#f4f6fa"/><stop offset="1" stop-color="#c3cddd"/></linearGradient></defs>
<path d="M0.5 2.5V1.3Q0.5 0.5 1.3 0.5H5.6Q6.4 0.5 6.5 1.3V2.5" fill="#eef2f8" stroke="#8ea5c4"/>
<rect x="0.5" y="2.5" width="14" height="9" fill="url(#fg)" stroke="#8ea5c4"/>
<path d="M14.6 3v9M0.8 11.7H15.2" stroke="#3d5c88" stroke-width="1.3" fill="none"/></svg><span class="t" style="left:49.8px;top:342px;height:16px;line-height:16px;font-size:11px;font-weight:400;color:#000;letter-spacing:-0.42px;">Desktop Demo</span><div style="position:absolute;left:30px;top:361px;width:13px;height:16px;background:#fff"></div><svg style="position:absolute;left:33px;top:364.5px;" width="7" height="10" viewBox="0 0 7 10"><path d="M1 0.9L5 4.9L1 8.9" fill="none" stroke="#a6a6a6" stroke-width="1.6"/></svg><div style="position:absolute;left:44px;top:369px;width:1px;height:1px;background:#5a5a5a"></div><div style="position:absolute;left:46px;top:369px;width:1px;height:1px;background:#5a5a5a"></div><svg style="position:absolute;left:49px;top:362px;" width="16" height="13" viewBox="0 0 16 13">
<defs><linearGradient id="fg" x1="0" y1="0" x2="1" y2="1"><stop offset="0" stop-color="#ffffff"/><stop offset="0.55" stop-color="#f4f6fa"/><stop offset="1" stop-color="#c3cddd"/></linearGradient></defs>
<path d="M0.5 2.5V1.3Q0.5 0.5 1.3 0.5H5.6Q6.4 0.5 6.5 1.3V2.5" fill="#eef2f8" stroke="#8ea5c4"/>
<rect x="0.5" y="2.5" width="14" height="9" fill="url(#fg)" stroke="#8ea5c4"/>
<path d="M14.6 3v9M0.8 11.7H15.2" stroke="#3d5c88" stroke-width="1.3" fill="none"/></svg><span class="t" style="left:70.8px;top:360px;height:16px;line-height:16px;font-size:11px;font-weight:400;color:#000;letter-spacing:-0.07px;">Auswertungen</span><div style="position:absolute;left:30px;top:379px;width:13px;height:16px;background:#fff"></div><svg style="position:absolute;left:33px;top:382.5px;" width="7" height="10" viewBox="0 0 7 10"><path d="M1 0.9L5 4.9L1 8.9" fill="none" stroke="#a6a6a6" stroke-width="1.6"/></svg><div style="position:absolute;left:44px;top:387px;width:1px;height:1px;background:#5a5a5a"></div><div style="position:absolute;left:46px;top:387px;width:1px;height:1px;background:#5a5a5a"></div><svg style="position:absolute;left:49px;top:380px;" width="16" height="13" viewBox="0 0 16 13">
<defs><linearGradient id="fg" x1="0" y1="0" x2="1" y2="1"><stop offset="0" stop-color="#ffffff"/><stop offset="0.55" stop-color="#f4f6fa"/><stop offset="1" stop-color="#c3cddd"/></linearGradient></defs>
<path d="M0.5 2.5V1.3Q0.5 0.5 1.3 0.5H5.6Q6.4 0.5 6.5 1.3V2.5" fill="#eef2f8" stroke="#8ea5c4"/>
<rect x="0.5" y="2.5" width="14" height="9" fill="url(#fg)" stroke="#8ea5c4"/>
<path d="M14.6 3v9M0.8 11.7H15.2" stroke="#3d5c88" stroke-width="1.3" fill="none"/></svg><span class="t" style="left:70.8px;top:378px;height:16px;line-height:16px;font-size:11px;font-weight:400;color:#000;letter-spacing:-0.19px;">Neuer Ordner</span><div style="position:absolute;left:30px;top:397px;width:13px;height:16px;background:#fff"></div><svg style="position:absolute;left:33px;top:400.5px;" width="7" height="10" viewBox="0 0 7 10"><path d="M1 0.9L5 4.9L1 8.9" fill="none" stroke="#a6a6a6" stroke-width="1.6"/></svg><div style="position:absolute;left:44px;top:405px;width:1px;height:1px;background:#5a5a5a"></div><div style="position:absolute;left:46px;top:405px;width:1px;height:1px;background:#5a5a5a"></div><svg style="position:absolute;left:49px;top:398px;" width="16" height="13" viewBox="0 0 16 13">
<defs><linearGradient id="fg" x1="0" y1="0" x2="1" y2="1"><stop offset="0" stop-color="#ffffff"/><stop offset="0.55" stop-color="#f4f6fa"/><stop offset="1" stop-color="#c3cddd"/></linearGradient></defs>
<path d="M0.5 2.5V1.3Q0.5 0.5 1.3 0.5H5.6Q6.4 0.5 6.5 1.3V2.5" fill="#eef2f8" stroke="#8ea5c4"/>
<rect x="0.5" y="2.5" width="14" height="9" fill="url(#fg)" stroke="#8ea5c4"/>
<path d="M14.6 3v9M0.8 11.7H15.2" stroke="#3d5c88" stroke-width="1.3" fill="none"/></svg><span class="t" style="left:70.8px;top:396px;height:16px;line-height:16px;font-size:11px;font-weight:400;color:#000;letter-spacing:-0.09px;">Selbst angelegte Wertpapiere</span><div style="position:absolute;left:30px;top:415px;width:13px;height:16px;background:#fff"></div><svg style="position:absolute;left:33px;top:418.5px;" width="7" height="10" viewBox="0 0 7 10"><path d="M1 0.9L5 4.9L1 8.9" fill="none" stroke="#a6a6a6" stroke-width="1.6"/></svg><div style="position:absolute;left:44px;top:423px;width:1px;height:1px;background:#5a5a5a"></div><div style="position:absolute;left:46px;top:423px;width:1px;height:1px;background:#5a5a5a"></div><svg style="position:absolute;left:49px;top:416px;" width="16" height="13" viewBox="0 0 16 13">
<defs><linearGradient id="fg" x1="0" y1="0" x2="1" y2="1"><stop offset="0" stop-color="#ffffff"/><stop offset="0.55" stop-color="#f4f6fa"/><stop offset="1" stop-color="#c3cddd"/></linearGradient></defs>
<path d="M0.5 2.5V1.3Q0.5 0.5 1.3 0.5H5.6Q6.4 0.5 6.5 1.3V2.5" fill="#eef2f8" stroke="#8ea5c4"/>
<rect x="0.5" y="2.5" width="14" height="9" fill="url(#fg)" stroke="#8ea5c4"/>
<path d="M14.6 3v9M0.8 11.7H15.2" stroke="#3d5c88" stroke-width="1.3" fill="none"/></svg><span class="t" style="left:70.8px;top:414px;height:16px;line-height:16px;font-size:11px;font-weight:400;color:#000;letter-spacing:-0.10px;">Watchliste</span><div style="position:absolute;left:30px;top:433px;width:13px;height:16px;background:#fff"></div><svg style="position:absolute;left:33px;top:436.5px;" width="7" height="10" viewBox="0 0 7 10"><path d="M1 0.9L5 4.9L1 8.9" fill="none" stroke="#a6a6a6" stroke-width="1.6"/></svg><div style="position:absolute;left:44px;top:441px;width:1px;height:1px;background:#5a5a5a"></div><div style="position:absolute;left:46px;top:441px;width:1px;height:1px;background:#5a5a5a"></div><svg style="position:absolute;left:49px;top:434px;" width="16" height="13" viewBox="0 0 16 13">
<defs><linearGradient id="fg" x1="0" y1="0" x2="1" y2="1"><stop offset="0" stop-color="#ffffff"/><stop offset="0.55" stop-color="#f4f6fa"/><stop offset="1" stop-color="#c3cddd"/></linearGradient></defs>
<path d="M0.5 2.5V1.3Q0.5 0.5 1.3 0.5H5.6Q6.4 0.5 6.5 1.3V2.5" fill="#eef2f8" stroke="#8ea5c4"/>
<rect x="0.5" y="2.5" width="14" height="9" fill="url(#fg)" stroke="#8ea5c4"/>
<path d="M14.6 3v9M0.8 11.7H15.2" stroke="#3d5c88" stroke-width="1.3" fill="none"/></svg><span class="t" style="left:70.8px;top:432px;height:16px;line-height:16px;font-size:11px;font-weight:400;color:#000;letter-spacing:-0.05px;">Wiederhergestellte Objekte</span><div style="position:absolute;left:30px;top:451px;width:13px;height:16px;background:#fff"></div><svg style="position:absolute;left:31px;top:456.3px;" width="9" height="6" viewBox="0 0 9 6"><path d="M0.7 0.9L4.5 4.6L8.3 0.9" fill="none" stroke="#404040" stroke-width="1.7"/></svg><div style="position:absolute;left:44px;top:459px;width:1px;height:1px;background:#5a5a5a"></div><div style="position:absolute;left:46px;top:459px;width:1px;height:1px;background:#5a5a5a"></div><svg style="position:absolute;left:49px;top:450px;" width="16" height="16" viewBox="0 0 16 16">
<rect x="0.5" y="0.5" width="7.5" height="7.5" fill="#dde9fb" stroke="#7fa8ea"/>
<rect x="8" y="0.5" width="7.5" height="7.5" fill="#f9e8ea" stroke="#d98690"/>
<rect x="0.5" y="8" width="7.5" height="7.5" fill="#f2fbe8" stroke="#6cc02c"/>
<rect x="8" y="8" width="7.5" height="7.5" fill="#fcf7cf" stroke="#e4d648"/>
<path d="M8 3.2h1.2V2.2Q11.6 1.8 11.6 4.2Q11.6 6.6 9.2 6.2V5.2H8z" fill="#4d83e8" stroke="#2d62d6" stroke-width="0.8"/>
<path d="M3 8V6.8H2.2Q1.8 4.2 4.3 4.2Q6.8 4.2 6.4 6.8H5.6V8z" fill="#7fd24a" stroke="#4cb81e" stroke-width="0.8"/>
<path d="M9.8 8v1.2H9Q8.6 11.8 11.1 11.8Q13.6 11.8 13.2 9.2H12.4V8z" fill="#e8a0aa" stroke="#c4566a" stroke-width="0.8"/>
<path d="M8 10h-1.2V9.2Q4.4 8.8 4.4 11.2Q4.4 13.6 6.8 13.2V12.2H8z" fill="#f2e68a" stroke="#d9c62a" stroke-width="0.8"/></svg><span class="t" style="left:70.8px;top:450px;height:16px;line-height:16px;font-size:11px;font-weight:400;color:#000;letter-spacing:-0.21px;">Gruppe Musterinhaber</span><div style="position:absolute;left:51px;top:469px;width:13px;height:16px;background:#fff"></div><svg style="position:absolute;left:52px;top:474.3px;" width="9" height="6" viewBox="0 0 9 6"><path d="M0.7 0.9L4.5 4.6L8.3 0.9" fill="none" stroke="#404040" stroke-width="1.7"/></svg><div style="position:absolute;left:65px;top:477px;width:1px;height:1px;background:#5a5a5a"></div><div style="position:absolute;left:67px;top:477px;width:1px;height:1px;background:#5a5a5a"></div><svg style="position:absolute;left:76px;top:468px;shape-rendering:crispEdges" width="8" height="16" viewBox="0 0 8 16">
<rect x="2.5" y="0.5" width="2" height="2" fill="#fff" stroke="#3d8bff" stroke-width="1"/>
<path d="M0.5 4.5H2.5L3.5 6.5L4.5 4.5H6.5V9.5H5.5V15.5H4.5V9.5H2.5V15.5H1.5V9.5H0.5z" fill="#f4f8ff" stroke="#3d8bff" stroke-width="1" stroke-linejoin="miter"/>
<path d="M0 15.5h6" stroke="#7fb2ff" stroke-width="1"/></svg><svg style="position:absolute;left:70px;top:480px;shape-rendering:crispEdges" width="5" height="5" viewBox="0 0 5 5">
<path d="M1 0h3v1h1v3h-1v1h-3v-1h-1v-3h1z" fill="#0a0a0a"/>
<path d="M2 1h1v1h1v1h-1v1h-1v-1h-1v-1h1z" fill="#f5ea00"/>
<rect x="2" y="2" width="1" height="1" fill="#2020a0"/></svg><span class="t" style="left:91.8px;top:468px;height:16px;line-height:16px;font-size:11px;font-weight:400;color:#000;letter-spacing:-0.09px;">2008-150301</span><div style="position:absolute;left:72px;top:487px;width:13px;height:16px;background:#fff"></div><svg style="position:absolute;left:73px;top:492.3px;" width="9" height="6" viewBox="0 0 9 6"><path d="M0.7 0.9L4.5 4.6L8.3 0.9" fill="none" stroke="#404040" stroke-width="1.7"/></svg><div style="position:absolute;left:86px;top:495px;width:1px;height:1px;background:#5a5a5a"></div><div style="position:absolute;left:88px;top:495px;width:1px;height:1px;background:#5a5a5a"></div><svg style="position:absolute;left:91px;top:486px;" width="16" height="16" viewBox="0 0 16 16">
<defs><linearGradient id="pw" x1="0" y1="0" x2="1" y2="1"><stop offset="0" stop-color="#aebdd4"/><stop offset="1" stop-color="#f2f5f9"/></linearGradient></defs>
<path d="M8.5 4L15.5 1.5V9.5L8.5 15.5z" fill="url(#pw)"/>
<rect x="1" y="4" width="7.5" height="11" fill="#dcebfb"/>
<path d="M1.5 4V15M4 4V15M6.5 4V15M9 4V15" stroke="#6a82ac" stroke-width="1"/>
<path d="M0.5 3.5L4 1.5H15.5" fill="none" stroke="#7a8fb4" stroke-width="1"/>
<path d="M0.5 3.5H9.5L15.5 1.5" fill="none" stroke="#6a82ac" stroke-width="1.3"/>
<path d="M1 2.8L4.2 1.8H14L9.3 3.2z" fill="#9fb1cf"/>
<path d="M10 10L13 5.5V9z" fill="#fff"/>
<rect x="11.5" y="5.5" width="1.5" height="5.5" fill="#f4f7fb" stroke="#6a82ac" stroke-width="0.9"/>
<path d="M15 2V7.5" stroke="#7f95ba" stroke-width="1"/>
<path d="M14.2 7.5V9.5" stroke="#7f95ba" stroke-width="1"/>
<path d="M8.5 15.5L15 10.8" stroke="#8ea2c2" stroke-width="1" stroke-dasharray="1 1"/></svg><svg style="position:absolute;left:91px;top:498px;shape-rendering:crispEdges" width="5" height="5" viewBox="0 0 5 5">
<path d="M1 0h3v1h1v3h-1v1h-3v-1h-1v-3h1z" fill="#0a0a0a"/>
<path d="M2 1h1v1h1v1h-1v1h-1v-1h-1v-1h1z" fill="#f5ea00"/>
<rect x="2" y="2" width="1" height="1" fill="#2020a0"/></svg><span class="t" style="left:112.8px;top:486px;height:16px;line-height:16px;font-size:11px;font-weight:400;color:#000;letter-spacing:-0.11px;">2008-150301</span><div style="position:absolute;left:93px;top:505px;width:13px;height:16px;background:#fff"></div><svg style="position:absolute;left:94px;top:510.3px;" width="9" height="6" viewBox="0 0 9 6"><path d="M0.7 0.9L4.5 4.6L8.3 0.9" fill="none" stroke="#404040" stroke-width="1.7"/></svg><div style="position:absolute;left:107px;top:513px;width:1px;height:1px;background:#5a5a5a"></div><div style="position:absolute;left:109px;top:513px;width:1px;height:1px;background:#5a5a5a"></div><svg style="position:absolute;left:112px;top:504px;" width="16" height="16" viewBox="0 0 16 16">
<path d="M0.8 5L8 0.8L15.2 5z" fill="#fff" stroke="#3f74d0" stroke-width="1.3" stroke-linejoin="round"/>
<path d="M5.5 4L8 2.5L10.5 4z" fill="#dfe9fb"/>
<rect x="0.5" y="4.5" width="15" height="3" rx="0.8" fill="#fff" stroke="#6a97e6" stroke-width="1"/>
<rect x="1.5" y="7.5" width="2.2" height="6" fill="#4d8df5"/><rect x="2.2" y="7.5" width="0.8" height="6" fill="#a9c8fa"/>
<rect x="12.3" y="7.5" width="2.2" height="6" fill="#4d8df5"/><rect x="13" y="7.5" width="0.8" height="6" fill="#a9c8fa"/>
<rect x="4.5" y="8" width="7" height="5.6" fill="#f6e3a6" stroke="#e8c870" stroke-width="0.8"/>
<rect x="6.3" y="9.2" width="3.4" height="3.2" fill="#f5b400"/>
<rect x="7.2" y="8.2" width="1.6" height="1" fill="#6a97e6"/><rect x="7.2" y="12.4" width="1.6" height="1" fill="#6a97e6"/>
<rect x="1" y="13.5" width="15" height="2" fill="#4d8df5"/></svg><svg style="position:absolute;left:112px;top:516px;shape-rendering:crispEdges" width="5" height="5" viewBox="0 0 5 5">
<path d="M1 0h3v1h1v3h-1v1h-3v-1h-1v-3h1z" fill="#0a0a0a"/>
<path d="M2 1h1v1h1v1h-1v1h-1v-1h-1v-1h1z" fill="#f5ea00"/>
<rect x="2" y="2" width="1" height="1" fill="#2020a0"/></svg><span class="t" style="left:133.8px;top:504px;height:16px;line-height:16px;font-size:11px;font-weight:400;color:#000;letter-spacing:-0.10px;">2008-150301</span><div style="position:absolute;left:122px;top:531px;width:9px;height:1px;background:repeating-linear-gradient(to right,#6a6a6a 0 1px,transparent 1px 2px)"></div><svg style="position:absolute;left:134px;top:523px;" width="15" height="16" viewBox="0 0 15 16">
<rect x="0.5" y="0.5" width="12" height="13" fill="#fbfcfe" stroke="#2f9bd8" stroke-width="1"/>
<rect x="1.5" y="1.5" width="10" height="11" fill="none" stroke="#d6eaf8" stroke-width="1"/>
<path d="M3 3.5h7M3 5.5h7M3 8.5h3M3 10.5h3" stroke="#8f8f8f" stroke-width="1"/>
<path d="M8.6 9.6h2.8v2l2.8 3.2h-2.4l-1.8-2-1.8 2H5.8l2.8-3.2z" fill="#d9534f"/></svg><span class="t" style="left:154.8px;top:522px;height:16px;line-height:16px;font-size:11px;font-weight:400;color:#000;letter-spacing:0.08px;">6,5% Bundanl.V.97/27</span><div style="position:absolute;left:122px;top:549px;width:9px;height:1px;background:repeating-linear-gradient(to right,#6a6a6a 0 1px,transparent 1px 2px)"></div><svg style="position:absolute;left:134px;top:541px;" width="15" height="16" viewBox="0 0 15 16">
<rect x="0.5" y="0.5" width="12" height="13" fill="#fbfcfe" stroke="#2f9bd8" stroke-width="1"/>
<rect x="1.5" y="1.5" width="10" height="11" fill="none" stroke="#d6eaf8" stroke-width="1"/>
<path d="M3 3.5h7M3 5.5h7M3 8.5h3M3 10.5h3" stroke="#8f8f8f" stroke-width="1"/>
<path d="M8.6 9.6h2.8v2l2.8 3.2h-2.4l-1.8-2-1.8 2H5.8l2.8-3.2z" fill="#d9534f"/></svg><span class="t" style="left:154.8px;top:540px;height:16px;line-height:16px;font-size:11px;font-weight:400;color:#000;letter-spacing:-1.13px;">BASF SE</span><div style="position:absolute;left:122px;top:567px;width:9px;height:1px;background:repeating-linear-gradient(to right,#6a6a6a 0 1px,transparent 1px 2px)"></div><svg style="position:absolute;left:134px;top:559px;" width="15" height="16" viewBox="0 0 15 16">
<rect x="0.5" y="0.5" width="12" height="13" fill="#fbfcfe" stroke="#2f9bd8" stroke-width="1"/>
<rect x="1.5" y="1.5" width="10" height="11" fill="none" stroke="#d6eaf8" stroke-width="1"/>
<path d="M3 3.5h7M3 5.5h7M3 8.5h3M3 10.5h3" stroke="#8f8f8f" stroke-width="1"/>
<path d="M8.6 9.6h2.8v2l2.8 3.2h-2.4l-1.8-2-1.8 2H5.8l2.8-3.2z" fill="#d9534f"/></svg><span class="t" style="left:154.8px;top:558px;height:16px;line-height:16px;font-size:11px;font-weight:400;color:#000;letter-spacing:-0.53px;">Daimler AG</span><div style="position:absolute;left:122px;top:585px;width:9px;height:1px;background:repeating-linear-gradient(to right,#6a6a6a 0 1px,transparent 1px 2px)"></div><svg style="position:absolute;left:134px;top:577px;" width="15" height="16" viewBox="0 0 15 16">
<rect x="0.5" y="0.5" width="12" height="13" fill="#fbfcfe" stroke="#2f9bd8" stroke-width="1"/>
<rect x="1.5" y="1.5" width="10" height="11" fill="none" stroke="#d6eaf8" stroke-width="1"/>
<path d="M3 3.5h7M3 5.5h7M3 8.5h3M3 10.5h3" stroke="#8f8f8f" stroke-width="1"/>
<path d="M8.6 9.6h2.8v2l2.8 3.2h-2.4l-1.8-2-1.8 2H5.8l2.8-3.2z" fill="#d9534f"/></svg><span class="t" style="left:154.8px;top:576px;height:16px;line-height:16px;font-size:11px;font-weight:400;color:#000;letter-spacing:-0.14px;">DekaRent-international TF</span><div style="position:absolute;left:122px;top:603px;width:9px;height:1px;background:repeating-linear-gradient(to right,#6a6a6a 0 1px,transparent 1px 2px)"></div><svg style="position:absolute;left:134px;top:595px;" width="15" height="16" viewBox="0 0 15 16">
<rect x="0.5" y="0.5" width="12" height="13" fill="#fbfcfe" stroke="#2f9bd8" stroke-width="1"/>
<rect x="1.5" y="1.5" width="10" height="11" fill="none" stroke="#d6eaf8" stroke-width="1"/>
<path d="M3 3.5h7M3 5.5h7M3 8.5h3M3 10.5h3" stroke="#8f8f8f" stroke-width="1"/>
<path d="M8.6 9.6h2.8v2l2.8 3.2h-2.4l-1.8-2-1.8 2H5.8l2.8-3.2z" fill="#d9534f"/></svg><span class="t" style="left:154.8px;top:594px;height:16px;line-height:16px;font-size:11px;font-weight:400;color:#000;letter-spacing:-0.29px;">Deutsche Telekom AG</span><div style="position:absolute;left:122px;top:621px;width:9px;height:1px;background:repeating-linear-gradient(to right,#6a6a6a 0 1px,transparent 1px 2px)"></div><svg style="position:absolute;left:134px;top:613px;" width="15" height="16" viewBox="0 0 15 16">
<rect x="0.5" y="0.5" width="12" height="13" fill="#fbfcfe" stroke="#2f9bd8" stroke-width="1"/>
<rect x="1.5" y="1.5" width="10" height="11" fill="none" stroke="#d6eaf8" stroke-width="1"/>
<path d="M3 3.5h7M3 5.5h7M3 8.5h3M3 10.5h3" stroke="#8f8f8f" stroke-width="1"/>
<path d="M8.6 9.6h2.8v2l2.8 3.2h-2.4l-1.8-2-1.8 2H5.8l2.8-3.2z" fill="#d9534f"/></svg><span class="t" style="left:154.8px;top:612px;height:16px;line-height:16px;font-size:11px;font-weight:400;color:#000;letter-spacing:-0.39px;">DWS Top Dynamic</span><div style="position:absolute;left:122px;top:639px;width:9px;height:1px;background:repeating-linear-gradient(to right,#6a6a6a 0 1px,transparent 1px 2px)"></div><svg style="position:absolute;left:134px;top:631px;" width="15" height="16" viewBox="0 0 15 16">
<rect x="0.5" y="0.5" width="12" height="13" fill="#fbfcfe" stroke="#2f9bd8" stroke-width="1"/>
<rect x="1.5" y="1.5" width="10" height="11" fill="none" stroke="#d6eaf8" stroke-width="1"/>
<path d="M3 3.5h7M3 5.5h7M3 8.5h3M3 10.5h3" stroke="#8f8f8f" stroke-width="1"/>
<path d="M8.6 9.6h2.8v2l2.8 3.2h-2.4l-1.8-2-1.8 2H5.8l2.8-3.2z" fill="#d9534f"/></svg><span class="t" style="left:154.8px;top:630px;height:16px;line-height:16px;font-size:11px;font-weight:400;color:#000;letter-spacing:-0.29px;">Henkel AG &amp; Co. KGaA Vorzugsaktien</span><div style="position:absolute;left:122px;top:657px;width:9px;height:1px;background:repeating-linear-gradient(to right,#6a6a6a 0 1px,transparent 1px 2px)"></div><svg style="position:absolute;left:134px;top:649px;" width="15" height="16" viewBox="0 0 15 16">
<rect x="0.5" y="0.5" width="12" height="13" fill="#fbfcfe" stroke="#2f9bd8" stroke-width="1"/>
<rect x="1.5" y="1.5" width="10" height="11" fill="none" stroke="#d6eaf8" stroke-width="1"/>
<path d="M3 3.5h7M3 5.5h7M3 8.5h3M3 10.5h3" stroke="#8f8f8f" stroke-width="1"/>
<path d="M8.6 9.6h2.8v2l2.8 3.2h-2.4l-1.8-2-1.8 2H5.8l2.8-3.2z" fill="#d9534f"/></svg><span class="t" style="left:154.8px;top:648px;height:16px;line-height:16px;font-size:11px;font-weight:400;color:#000;letter-spacing:-0.12px;">Infineon Technologies AG</span><div style="position:absolute;left:122px;top:675px;width:9px;height:1px;background:repeating-linear-gradient(to right,#6a6a6a 0 1px,transparent 1px 2px)"></div><svg style="position:absolute;left:134px;top:667px;" width="15" height="16" viewBox="0 0 15 16">
<rect x="0.5" y="0.5" width="12" height="13" fill="#fbfcfe" stroke="#2f9bd8" stroke-width="1"/>
<rect x="1.5" y="1.5" width="10" height="11" fill="none" stroke="#d6eaf8" stroke-width="1"/>
<path d="M3 3.5h7M3 5.5h7M3 8.5h3M3 10.5h3" stroke="#8f8f8f" stroke-width="1"/>
<path d="M8.6 9.6h2.8v2l2.8 3.2h-2.4l-1.8-2-1.8 2H5.8l2.8-3.2z" fill="#d9534f"/></svg><span class="t" style="left:154.8px;top:666px;height:16px;line-height:16px;font-size:11px;font-weight:400;color:#000;letter-spacing:-0.58px;">UniGlobal</span><div style="position:absolute;left:101px;top:693px;width:9px;height:1px;background:repeating-linear-gradient(to right,#6a6a6a 0 1px,transparent 1px 2px)"></div><svg style="position:absolute;left:111px;top:683px;" width="17" height="17" viewBox="0 0 17 17">
<defs><linearGradient id="cg" x1="0" y1="0" x2="1" y2="0"><stop offset="0" stop-color="#e8a800"/><stop offset="0.45" stop-color="#ffe9a0"/><stop offset="1" stop-color="#d89a00"/></linearGradient></defs>
<path d="M10 0.4L15.8 5.6L7.5 15L0.4 10z" fill="#5f8ae8"/>
<path d="M10 1.8L14.2 5.6L7.5 13L2.2 9.8z" fill="none" stroke="#a9c2f6" stroke-width="0.9" stroke-dasharray="1.2 1"/>
<circle cx="8.5" cy="6.5" r="1.6" fill="#9db9f4"/><circle cx="5" cy="9.5" r="1" fill="#c4d6fa"/><circle cx="11.5" cy="4" r="0.9" fill="#c4d6fa"/>
<rect x="7.5" y="7" width="8.5" height="9.5" fill="url(#cg)"/>
<path d="M7.5 8.8h8.5M7.5 10.7h8.5M7.5 12.6h8.5M7.5 14.5h8.5" stroke="#fff6d8" stroke-width="0.9"/>
<path d="M7.5 7.2h8.5M7.5 16.3h8.5" stroke="#b07c00" stroke-width="0.8"/>
<path d="M16.3 7.5v9.3" stroke="#c9b37a" stroke-width="0.7"/></svg><svg style="position:absolute;left:112px;top:696px;shape-rendering:crispEdges" width="5" height="5" viewBox="0 0 5 5">
<path d="M1 0h3v1h1v3h-1v1h-3v-1h-1v-3h1z" fill="#0a0a0a"/>
<path d="M2 1h1v1h1v1h-1v1h-1v-1h-1v-1h1z" fill="#f5ea00"/>
<rect x="2" y="2" width="1" height="1" fill="#2020a0"/></svg><span class="t" style="left:133.8px;top:684px;height:16px;line-height:16px;font-size:11px;font-weight:400;color:#000;letter-spacing:-0.10px;">2008-150301</span><div style="position:absolute;left:101px;top:711px;width:9px;height:1px;background:repeating-linear-gradient(to right,#6a6a6a 0 1px,transparent 1px 2px)"></div><svg style="position:absolute;left:111px;top:701px;" width="17" height="17" viewBox="0 0 17 17">
<defs><linearGradient id="cg" x1="0" y1="0" x2="1" y2="0"><stop offset="0" stop-color="#e8a800"/><stop offset="0.45" stop-color="#ffe9a0"/><stop offset="1" stop-color="#d89a00"/></linearGradient></defs>
<path d="M10 0.4L15.8 5.6L7.5 15L0.4 10z" fill="#5f8ae8"/>
<path d="M10 1.8L14.2 5.6L7.5 13L2.2 9.8z" fill="none" stroke="#a9c2f6" stroke-width="0.9" stroke-dasharray="1.2 1"/>
<circle cx="8.5" cy="6.5" r="1.6" fill="#9db9f4"/><circle cx="5" cy="9.5" r="1" fill="#c4d6fa"/><circle cx="11.5" cy="4" r="0.9" fill="#c4d6fa"/>
<rect x="7.5" y="7" width="8.5" height="9.5" fill="url(#cg)"/>
<path d="M7.5 8.8h8.5M7.5 10.7h8.5M7.5 12.6h8.5M7.5 14.5h8.5" stroke="#fff6d8" stroke-width="0.9"/>
<path d="M7.5 7.2h8.5M7.5 16.3h8.5" stroke="#b07c00" stroke-width="0.8"/>
<path d="M16.3 7.5v9.3" stroke="#c9b37a" stroke-width="0.7"/></svg><svg style="position:absolute;left:112px;top:714px;shape-rendering:crispEdges" width="5" height="5" viewBox="0 0 5 5">
<path d="M1 0h3v1h1v3h-1v1h-3v-1h-1v-3h1z" fill="#0a0a0a"/>
<path d="M2 1h1v1h1v1h-1v1h-1v-1h-1v-1h1z" fill="#f5ea00"/>
<rect x="2" y="2" width="1" height="1" fill="#2020a0"/></svg><span class="t" style="left:133.8px;top:702px;height:16px;line-height:16px;font-size:11px;font-weight:400;color:#000;letter-spacing:-0.43px;">2008-150301mmmm</span><div style="position:absolute;left:72px;top:721px;width:13px;height:16px;background:#fff"></div><svg style="position:absolute;left:73px;top:726.3px;" width="9" height="6" viewBox="0 0 9 6"><path d="M0.7 0.9L4.5 4.6L8.3 0.9" fill="none" stroke="#404040" stroke-width="1.7"/></svg><div style="position:absolute;left:86px;top:729px;width:1px;height:1px;background:#5a5a5a"></div><div style="position:absolute;left:88px;top:729px;width:1px;height:1px;background:#5a5a5a"></div><svg style="position:absolute;left:91px;top:720px;" width="16" height="16" viewBox="0 0 16 16">
<defs><linearGradient id="pw" x1="0" y1="0" x2="1" y2="1"><stop offset="0" stop-color="#aebdd4"/><stop offset="1" stop-color="#f2f5f9"/></linearGradient></defs>
<path d="M8.5 4L15.5 1.5V9.5L8.5 15.5z" fill="url(#pw)"/>
<rect x="1" y="4" width="7.5" height="11" fill="#dcebfb"/>
<path d="M1.5 4V15M4 4V15M6.5 4V15M9 4V15" stroke="#6a82ac" stroke-width="1"/>
<path d="M0.5 3.5L4 1.5H15.5" fill="none" stroke="#7a8fb4" stroke-width="1"/>
<path d="M0.5 3.5H9.5L15.5 1.5" fill="none" stroke="#6a82ac" stroke-width="1.3"/>
<path d="M1 2.8L4.2 1.8H14L9.3 3.2z" fill="#9fb1cf"/>
<path d="M10 10L13 5.5V9z" fill="#fff"/>
<rect x="11.5" y="5.5" width="1.5" height="5.5" fill="#f4f7fb" stroke="#6a82ac" stroke-width="0.9"/>
<path d="M15 2V7.5" stroke="#7f95ba" stroke-width="1"/>
<path d="M14.2 7.5V9.5" stroke="#7f95ba" stroke-width="1"/>
<path d="M8.5 15.5L15 10.8" stroke="#8ea2c2" stroke-width="1" stroke-dasharray="1 1"/></svg><svg style="position:absolute;left:91px;top:732px;shape-rendering:crispEdges" width="5" height="5" viewBox="0 0 5 5">
<path d="M1 0h3v1h1v3h-1v1h-3v-1h-1v-3h1z" fill="#0a0a0a"/>
<path d="M2 1h1v1h1v1h-1v1h-1v-1h-1v-1h1z" fill="#f5ea00"/>
<rect x="2" y="2" width="1" height="1" fill="#2020a0"/></svg><span class="t" style="left:112.8px;top:720px;height:16px;line-height:16px;font-size:11px;font-weight:400;color:#000;letter-spacing:-0.18px;">2008-150301 Neu</span><div style="position:absolute;left:101px;top:747px;width:9px;height:1px;background:repeating-linear-gradient(to right,#6a6a6a 0 1px,transparent 1px 2px)"></div><svg style="position:absolute;left:112px;top:738px;" width="16" height="16" viewBox="0 0 16 16">
<path d="M0.8 5L8 0.8L15.2 5z" fill="#fff" stroke="#3f74d0" stroke-width="1.3" stroke-linejoin="round"/>
<path d="M5.5 4L8 2.5L10.5 4z" fill="#dfe9fb"/>
<rect x="0.5" y="4.5" width="15" height="3" rx="0.8" fill="#fff" stroke="#6a97e6" stroke-width="1"/>
<rect x="1.5" y="7.5" width="2.2" height="6" fill="#4d8df5"/><rect x="2.2" y="7.5" width="0.8" height="6" fill="#a9c8fa"/>
<rect x="12.3" y="7.5" width="2.2" height="6" fill="#4d8df5"/><rect x="13" y="7.5" width="0.8" height="6" fill="#a9c8fa"/>
<rect x="4.5" y="8" width="7" height="5.6" fill="#f6e3a6" stroke="#e8c870" stroke-width="0.8"/>
<rect x="6.3" y="9.2" width="3.4" height="3.2" fill="#f5b400"/>
<rect x="7.2" y="8.2" width="1.6" height="1" fill="#6a97e6"/><rect x="7.2" y="12.4" width="1.6" height="1" fill="#6a97e6"/>
<rect x="1" y="13.5" width="15" height="2" fill="#4d8df5"/></svg><svg style="position:absolute;left:112px;top:750px;shape-rendering:crispEdges" width="5" height="5" viewBox="0 0 5 5">
<path d="M1 0h3v1h1v3h-1v1h-3v-1h-1v-3h1z" fill="#0a0a0a"/>
<path d="M2 1h1v1h1v1h-1v1h-1v-1h-1v-1h1z" fill="#f5ea00"/>
<rect x="2" y="2" width="1" height="1" fill="#2020a0"/></svg><span class="t" style="left:133.8px;top:738px;height:16px;line-height:16px;font-size:11px;font-weight:400;color:#000;letter-spacing:-0.18px;">2008-150301 Neu</span><div style="position:absolute;left:101px;top:765px;width:9px;height:1px;background:repeating-linear-gradient(to right,#6a6a6a 0 1px,transparent 1px 2px)"></div><svg style="position:absolute;left:111px;top:755px;" width="17" height="17" viewBox="0 0 17 17">
<defs><linearGradient id="cg" x1="0" y1="0" x2="1" y2="0"><stop offset="0" stop-color="#e8a800"/><stop offset="0.45" stop-color="#ffe9a0"/><stop offset="1" stop-color="#d89a00"/></linearGradient></defs>
<path d="M10 0.4L15.8 5.6L7.5 15L0.4 10z" fill="#5f8ae8"/>
<path d="M10 1.8L14.2 5.6L7.5 13L2.2 9.8z" fill="none" stroke="#a9c2f6" stroke-width="0.9" stroke-dasharray="1.2 1"/>
<circle cx="8.5" cy="6.5" r="1.6" fill="#9db9f4"/><circle cx="5" cy="9.5" r="1" fill="#c4d6fa"/><circle cx="11.5" cy="4" r="0.9" fill="#c4d6fa"/>
<rect x="7.5" y="7" width="8.5" height="9.5" fill="url(#cg)"/>
<path d="M7.5 8.8h8.5M7.5 10.7h8.5M7.5 12.6h8.5M7.5 14.5h8.5" stroke="#fff6d8" stroke-width="0.9"/>
<path d="M7.5 7.2h8.5M7.5 16.3h8.5" stroke="#b07c00" stroke-width="0.8"/>
<path d="M16.3 7.5v9.3" stroke="#c9b37a" stroke-width="0.7"/></svg><svg style="position:absolute;left:112px;top:768px;shape-rendering:crispEdges" width="5" height="5" viewBox="0 0 5 5">
<path d="M1 0h3v1h1v3h-1v1h-3v-1h-1v-3h1z" fill="#0a0a0a"/>
<path d="M2 1h1v1h1v1h-1v1h-1v-1h-1v-1h1z" fill="#f5ea00"/>
<rect x="2" y="2" width="1" height="1" fill="#2020a0"/></svg><span class="t" style="left:133.8px;top:756px;height:16px;line-height:16px;font-size:11px;font-weight:400;color:#000;letter-spacing:-0.18px;">2008-150301 Neu</span><div style="position:absolute;left:51px;top:775px;width:13px;height:16px;background:#fff"></div><svg style="position:absolute;left:54px;top:778.5px;" width="7" height="10" viewBox="0 0 7 10"><path d="M1 0.9L5 4.9L1 8.9" fill="none" stroke="#a6a6a6" stroke-width="1.6"/></svg><div style="position:absolute;left:65px;top:783px;width:1px;height:1px;background:#5a5a5a"></div><div style="position:absolute;left:67px;top:783px;width:1px;height:1px;background:#5a5a5a"></div><svg style="position:absolute;left:76px;top:774px;shape-rendering:crispEdges" width="8" height="16" viewBox="0 0 8 16">
<rect x="2.5" y="0.5" width="2" height="2" fill="#fff" stroke="#3d8bff" stroke-width="1"/>
<path d="M0.5 4.5H2.5L3.5 6.5L4.5 4.5H6.5V9.5H5.5V15.5H4.5V9.5H2.5V15.5H1.5V9.5H0.5z" fill="#f4f8ff" stroke="#3d8bff" stroke-width="1" stroke-linejoin="miter"/>
<path d="M0 15.5h6" stroke="#7fb2ff" stroke-width="1"/></svg><span class="t" style="left:91.8px;top:774px;height:16px;line-height:16px;font-size:11px;font-weight:400;color:#000;letter-spacing:-0.09px;">2009-220301</span><div style="position:absolute;left:30px;top:793px;width:13px;height:16px;background:#fff"></div><svg style="position:absolute;left:33px;top:796.5px;" width="7" height="10" viewBox="0 0 7 10"><path d="M1 0.9L5 4.9L1 8.9" fill="none" stroke="#a6a6a6" stroke-width="1.6"/></svg><div style="position:absolute;left:44px;top:801px;width:1px;height:1px;background:#5a5a5a"></div><div style="position:absolute;left:46px;top:801px;width:1px;height:1px;background:#5a5a5a"></div><svg style="position:absolute;left:55px;top:792px;shape-rendering:crispEdges" width="8" height="16" viewBox="0 0 8 16">
<rect x="2.5" y="0.5" width="2" height="2" fill="#fff" stroke="#3d8bff" stroke-width="1"/>
<path d="M0.5 4.5H2.5L3.5 6.5L4.5 4.5H6.5V9.5H5.5V15.5H4.5V9.5H2.5V15.5H1.5V9.5H0.5z" fill="#f4f8ff" stroke="#3d8bff" stroke-width="1" stroke-linejoin="miter"/>
<path d="M0 15.5h6" stroke="#7fb2ff" stroke-width="1"/></svg><span class="t" style="left:70.8px;top:792px;height:16px;line-height:16px;font-size:11px;font-weight:400;color:#000;letter-spacing:-0.14px;">dm27-1 (1)</span><div style="position:absolute;left:30px;top:811px;width:13px;height:16px;background:#fff"></div><svg style="position:absolute;left:33px;top:814.5px;" width="7" height="10" viewBox="0 0 7 10"><path d="M1 0.9L5 4.9L1 8.9" fill="none" stroke="#a6a6a6" stroke-width="1.6"/></svg><div style="position:absolute;left:44px;top:819px;width:1px;height:1px;background:#5a5a5a"></div><div style="position:absolute;left:46px;top:819px;width:1px;height:1px;background:#5a5a5a"></div><svg style="position:absolute;left:55px;top:810px;shape-rendering:crispEdges" width="8" height="16" viewBox="0 0 8 16">
<rect x="2.5" y="0.5" width="2" height="2" fill="#fff" stroke="#3d8bff" stroke-width="1"/>
<path d="M0.5 4.5H2.5L3.5 6.5L4.5 4.5H6.5V9.5H5.5V15.5H4.5V9.5H2.5V15.5H1.5V9.5H0.5z" fill="#f4f8ff" stroke="#3d8bff" stroke-width="1" stroke-linejoin="miter"/>
<path d="M0 15.5h6" stroke="#7fb2ff" stroke-width="1"/></svg><span class="t" style="left:70.8px;top:810px;height:16px;line-height:16px;font-size:11px;font-weight:400;color:#000;letter-spacing:0.04px;">Inhaber A</span><div style="position:absolute;left:30px;top:829px;width:13px;height:16px;background:#fff"></div><svg style="position:absolute;left:33px;top:832.5px;" width="7" height="10" viewBox="0 0 7 10"><path d="M1 0.9L5 4.9L1 8.9" fill="none" stroke="#a6a6a6" stroke-width="1.6"/></svg><div style="position:absolute;left:44px;top:837px;width:1px;height:1px;background:#5a5a5a"></div><div style="position:absolute;left:46px;top:837px;width:1px;height:1px;background:#5a5a5a"></div><svg style="position:absolute;left:55px;top:828px;shape-rendering:crispEdges" width="8" height="16" viewBox="0 0 8 16">
<rect x="2.5" y="0.5" width="2" height="2" fill="#fff" stroke="#3d8bff" stroke-width="1"/>
<path d="M0.5 4.5H2.5L3.5 6.5L4.5 4.5H6.5V9.5H5.5V15.5H4.5V9.5H2.5V15.5H1.5V9.5H0.5z" fill="#f4f8ff" stroke="#3d8bff" stroke-width="1" stroke-linejoin="miter"/>
<path d="M0 15.5h6" stroke="#7fb2ff" stroke-width="1"/></svg><span class="t" style="left:70.8px;top:828px;height:16px;line-height:16px;font-size:11px;font-weight:400;color:#000;letter-spacing:-0.15px;">Inhaber B</span><div style="position:absolute;left:335px;top:323px;width:16px;height:525px;background:#f0f0f0"></div><div style="position:absolute;left:335px;top:340px;width:15px;height:457px;background:#cdcdcd"></div><svg style="position:absolute;left:338px;top:328px;" width="10" height="8" viewBox="0 0 10 8"><path d="M1.6 6L4.7 2.8l3.1 3.2" fill="none" stroke="#505050" stroke-width="2"/></svg><svg style="position:absolute;left:338px;top:834px;" width="10" height="8" viewBox="0 0 10 8"><path d="M1.6 2.4L4.7 5.6l3.1-3.2" fill="none" stroke="#505050" stroke-width="2"/></svg><div style="position:absolute;left:3px;top:848px;width:348px;height:16px;background:#f0f0f0"></div><div style="position:absolute;left:20px;top:848px;width:296px;height:15px;background:#cdcdcd"></div><svg style="position:absolute;left:7.6px;top:851px;" width="7" height="10" viewBox="0 0 7 10"><path d="M5 1.9L1.8 5l3.2 3.1" fill="none" stroke="#505050" stroke-width="2"/></svg><svg style="position:absolute;left:322.2px;top:851px;" width="7" height="10" viewBox="0 0 7 10"><path d="M2 1.9L5.2 5L2 8.1" fill="none" stroke="#505050" stroke-width="2"/></svg></div>
<div id="main-panel"><div style="position:absolute;left:354px;top:154px;width:890px;height:711px;background:#eeeff0;border:1px solid #8c8c8c;box-sizing:border-box"></div><div style="position:absolute;left:355px;top:220px;width:888px;height:644px;background:linear-gradient(#eeeff0,#bcbdbf)"></div><div style="position:absolute;left:355px;top:155px;width:888px;height:21px;background:linear-gradient(#eaebed,#e4e6e8)"></div><div style="position:absolute;left:355px;top:176px;width:888px;height:1px;background:#36434d"></div><div style="position:absolute;left:355px;top:177px;width:888px;height:1px;background:#f3f3f4"></div><div style="position:absolute;left:355px;top:178px;width:888px;height:20px;background:linear-gradient(#eaebed,#e4e6e8)"></div><div style="position:absolute;left:540px;top:157px;width:60px;height:20px;background:linear-gradient(#f0f1f2,#e6e8ea);border:1px solid #36434d;border-bottom:none;box-sizing:border-box"></div><div style="position:absolute;left:418px;top:158px;width:1px;height:15px;background:#8a8a8a"></div><div style="position:absolute;left:463px;top:158px;width:1px;height:15px;background:#8a8a8a"></div><div style="position:absolute;left:660px;top:158px;width:1px;height:15px;background:#8a8a8a"></div><span class="t" style="left:365px;top:160px;height:16px;line-height:16px;font-size:11.5px;font-weight:700;color:#000;letter-spacing:0.02px;">Charting</span><span class="t" style="left:424.1px;top:160px;height:16px;line-height:16px;font-size:11.5px;font-weight:700;color:#000;letter-spacing:-0.16px;">Risiko</span><span class="t" style="left:468.9px;top:160px;height:16px;line-height:16px;font-size:11.5px;font-weight:700;color:#000;letter-spacing:0.00px;">Compliance</span><span class="t" style="left:544.9px;top:160px;height:16px;line-height:16px;font-size:11.5px;font-weight:700;color:#000;letter-spacing:0.06px;">Anleihen</span><span class="t" style="left:605px;top:160px;height:16px;line-height:16px;font-size:11.5px;font-weight:700;color:#000;letter-spacing:0.66px;">Intraday</span><span class="t" style="left:666.1px;top:160px;height:16px;line-height:16px;font-size:11.5px;font-weight:700;color:#000;letter-spacing:0.49px;">Derivate</span><div style="position:absolute;left:355px;top:198px;width:888px;height:22px;background:linear-gradient(#5a6975,#475966)"></div><div style="position:absolute;left:355px;top:198px;width:888px;height:1px;background:#3f4d58"></div><span class="t" style="left:361px;top:199px;height:20px;line-height:20px;font-size:14.67px;font-weight:700;color:#fff;letter-spacing:0.17px;">Anleihe-Rechner</span><div style="position:absolute;left:360px;top:179px;width:51px;height:20px;background:linear-gradient(#fdf1e2,#fbd7ba);border:1px solid #36434d;border-bottom:none;box-sizing:border-box"></div><span class="t" style="left:364.3px;top:182px;height:16px;line-height:16px;font-size:11px;font-weight:400;color:#000;letter-spacing:-0.31px;">Rechner</span><div style="position:absolute;left:366px;top:232px;width:697px;height:445px;background:#f5f5f5;border:1px solid #a8a8a8;box-sizing:border-box"></div><span class="t" style="left:383.6px;top:253px;height:16px;line-height:16px;font-size:11px;font-weight:400;color:#000;letter-spacing:-0.63px;">Name:</span><span class="t" style="left:383.6px;top:283.3px;height:16px;line-height:16px;font-size:11px;font-weight:400;color:#000;letter-spacing:0.05px;">Anleihetyp:</span><span class="t" style="left:383.6px;top:313.3px;height:16px;line-height:16px;font-size:11px;font-weight:400;color:#000;letter-spacing:-0.08px;">Zinsintervall:</span><span class="t" style="left:383.6px;top:343.2px;height:16px;line-height:16px;font-size:11px;font-weight:400;color:#000;letter-spacing:-0.10px;">Erster Handelstag:</span><div style="position:absolute;left:486px;top:250px;width:253px;height:21px;background:#fff;border:1px solid #7a7a7a;box-sizing:border-box"></div><svg style="position:absolute;left:490px;top:254px;" width="15" height="16" viewBox="0 0 15 16">
<rect x="0.5" y="0.5" width="12" height="13" fill="#fbfcfe" stroke="#2f9bd8" stroke-width="1"/>
<rect x="1.5" y="1.5" width="10" height="11" fill="none" stroke="#d6eaf8" stroke-width="1"/>
<path d="M3 3.5h7M3 5.5h7M3 8.5h3M3 10.5h3" stroke="#8f8f8f" stroke-width="1"/>
<path d="M8.6 9.6h2.8v2l2.8 3.2h-2.4l-1.8-2-1.8 2H5.8l2.8-3.2z" fill="#d9534f"/></svg><span class="t" style="left:508.5px;top:252.5px;height:16px;line-height:16px;font-size:11px;font-weight:400;color:#000;letter-spacing:0.11px;">6,5% Bundanl.V.97/27</span><div style="position:absolute;left:486px;top:280px;width:120px;height:21px;background:#e1e1e1;border:1px solid #adadad;box-sizing:border-box"></div><span class="t" style="left:489.5px;top:282.5px;height:16px;line-height:16px;font-size:11px;font-weight:400;color:#000;letter-spacing:-0.35px;">Kuponbond</span><svg style="position:absolute;left:590px;top:287px;" width="10" height="7" viewBox="0 0 10 7"><path d="M0.7 1L4.7 5l4-4" fill="none" stroke="#444" stroke-width="1"/></svg><div style="position:absolute;left:486px;top:310px;width:120px;height:21px;background:#e1e1e1;border:1px solid #adadad;box-sizing:border-box"></div><span class="t" style="left:489.5px;top:312.5px;height:16px;line-height:16px;font-size:11px;font-weight:400;color:#000;letter-spacing:-0.34px;">Jährlich</span><svg style="position:absolute;left:590px;top:317px;" width="10" height="7" viewBox="0 0 10 7"><path d="M0.7 1L4.7 5l4-4" fill="none" stroke="#444" stroke-width="1"/></svg><div style="position:absolute;left:486px;top:340px;width:70px;height:21px;background:#fff;border:1px solid #7a7a7a;box-sizing:border-box"></div><span class="t" style="left:488.6px;top:342px;height:16px;line-height:16px;font-size:11px;font-weight:400;color:#000;letter-spacing:0.13px;">07/04/1997</span><svg style="position:absolute;left:741px;top:251px;" width="19" height="19" viewBox="0 0 19 19">
<path d="M6.8 11.2L1.6 16.6" stroke="#3a6fd0" stroke-width="2.4" stroke-linecap="round"/>
<path d="M6.6 11.6L2 16.4" stroke="#cfe0f8" stroke-width="0.8"/>
<circle cx="11" cy="7" r="5.2" fill="#e9f4ff" stroke="#3f7ad8" stroke-width="1.1"/>
<path d="M7.6 6.5A3.6 3.6 0 0 1 10.5 3.6" fill="none" stroke="#fff" stroke-width="1.2"/></svg><span class="t" style="left:629.3px;top:283.3px;height:16px;line-height:16px;font-size:11px;font-weight:400;color:#000;letter-spacing:0.08px;">Laufzeit:</span><span class="t" style="left:629.3px;top:313.3px;height:16px;line-height:16px;font-size:11px;font-weight:400;color:#000;letter-spacing:-0.23px;">Zinssatz:</span><div style="position:absolute;left:690px;top:280px;width:70px;height:21px;background:#fff;border:1px solid #7a7a7a;box-sizing:border-box"></div><span class="t" style="left:693px;top:282px;height:16px;line-height:16px;font-size:11px;font-weight:400;color:#000;letter-spacing:0.10px;">07/04/2027</span><div style="position:absolute;left:690px;top:310px;width:70px;height:21px;background:#fff;border:1px solid #7a7a7a;box-sizing:border-box"></div><span class="t" style="left:693px;top:312px;height:16px;line-height:16px;font-size:11px;font-weight:400;color:#000;letter-spacing:0.32px;">6.50%</span><svg style="position:absolute;left:770px;top:313px;" width="17" height="15" viewBox="0 0 17 15"><rect x="0.7" y="0.7" width="15" height="13" fill="#fff" stroke="#111" stroke-width="1.4"/><path d="M4.5 1v13M8.2 1v13M12 1v13M1 3.5h15" stroke="#111" stroke-width="1.2"/></svg><div style="position:absolute;left:630px;top:344px;width:13px;height:13px;background:#fff;border:1px solid #333;box-sizing:border-box"></div><span class="t" style="left:645.5px;top:342.2px;height:16px;line-height:16px;font-size:11px;font-weight:400;color:#000;letter-spacing:-0.20px;">Daten in Historie sind Zahlungstermine</span><span class="t" style="left:809.3px;top:283.3px;height:16px;line-height:16px;font-size:11px;font-weight:400;color:#000;letter-spacing:-0.28px;">Rückzahlungskurs:</span><span class="t" style="left:809.3px;top:313.3px;height:16px;line-height:16px;font-size:11px;font-weight:400;color:#000;letter-spacing:-0.12px;">Zinstermin:</span><div style="position:absolute;left:912px;top:280px;width:40px;height:21px;background:#fff;border:1px solid #7a7a7a;box-sizing:border-box"></div><span class="t" style="left:916px;top:282px;height:16px;line-height:16px;font-size:11px;font-weight:400;color:#000;letter-spacing:-0.98px;">100</span><div style="position:absolute;left:912px;top:310px;width:40px;height:21px;background:#fff;border:1px solid #7a7a7a;box-sizing:border-box"></div><span class="t" style="left:916px;top:312px;height:16px;line-height:16px;font-size:11px;font-weight:400;color:#000;letter-spacing:-0.21px;">07/04</span><div style="position:absolute;left:383px;top:372px;width:661px;height:1px;background:#dcdcdc"></div><span class="t" style="left:383.6px;top:385.2px;height:16px;line-height:16px;font-size:11px;font-weight:400;color:#000;letter-spacing:-0.05px;">Auswertungsdatum:</span><span class="t" style="left:383.6px;top:415.2px;height:16px;line-height:16px;font-size:11px;font-weight:400;color:#000;letter-spacing:-0.14px;">Zinstage:</span><span class="t" style="left:383.6px;top:445.2px;height:16px;line-height:16px;font-size:11px;font-weight:400;color:#000;letter-spacing:-0.13px;">Renditeberechnung:</span><div style="position:absolute;left:498px;top:382px;width:70px;height:21px;background:#fff;border:1px solid #7a7a7a;box-sizing:border-box"></div><span class="t" style="left:501px;top:384px;height:16px;line-height:16px;font-size:11px;font-weight:400;color:#000;letter-spacing:0.10px;">06/03/2020</span><div style="position:absolute;left:498px;top:412px;width:108px;height:21px;background:#e1e1e1;border:1px solid #adadad;box-sizing:border-box"></div><div style="position:absolute;left:499px;top:413px;width:88px;height:19px;overflow:hidden"><span class="t" style="left:2.5px;top:1.5px;height:16px;line-height:16px;font-size:11px;font-weight:400;color:#000;letter-spacing:0.16px;">act/act (ISMA-251)</span></div><svg style="position:absolute;left:590px;top:419px;" width="10" height="7" viewBox="0 0 10 7"><path d="M0.7 1L4.7 5l4-4" fill="none" stroke="#444" stroke-width="1"/></svg><div style="position:absolute;left:498px;top:442px;width:108px;height:21px;background:#e1e1e1;border:1px solid #adadad;box-sizing:border-box"></div><span class="t" style="left:501.5px;top:444.5px;height:16px;line-height:16px;font-size:11px;font-weight:400;color:#000;letter-spacing:-0.64px;">ISMA</span><svg style="position:absolute;left:590px;top:449px;" width="10" height="7" viewBox="0 0 10 7"><path d="M0.7 1L4.7 5l4-4" fill="none" stroke="#444" stroke-width="1"/></svg><span class="t" style="left:629.3px;top:385.2px;height:16px;line-height:16px;font-size:11px;font-weight:400;color:#000;letter-spacing:0.06px;">Steuersatz:</span><span class="t" style="left:629.3px;top:415.2px;height:16px;line-height:16px;font-size:11px;font-weight:400;color:#000;letter-spacing:-0.09px;">Marktzinsniveau:</span><span class="t" style="left:629.3px;top:445.2px;height:16px;line-height:16px;font-size:11px;font-weight:400;color:#000;letter-spacing:-0.14px;">Zinsänderung:</span><div style="position:absolute;left:728px;top:382px;width:60px;height:21px;background:#fff;border:1px solid #7a7a7a;box-sizing:border-box"></div><span class="t" style="left:731px;top:384px;height:16px;line-height:16px;font-size:11px;font-weight:400;color:#000;letter-spacing:0.23px;">25%</span><div style="position:absolute;left:771px;top:384px;width:15px;height:8px;background:#e9e9e9;border:1px solid #a8a8a8;border-top-color:#f2f2f2;border-left-color:#f2f2f2;box-sizing:border-box"></div><svg style="position:absolute;left:775px;top:386px;" width="7" height="4" viewBox="0 0 7 4"><path d="M0 3.5h6L3 0.5z" fill="#000"/></svg><div style="position:absolute;left:771px;top:393px;width:15px;height:8px;background:#e9e9e9;border:1px solid #a8a8a8;border-top-color:#f2f2f2;border-left-color:#f2f2f2;box-sizing:border-box"></div><svg style="position:absolute;left:775px;top:395px;" width="7" height="4" viewBox="0 0 7 4"><path d="M0 0.5h6L3 3.5z" fill="#000"/></svg><div style="position:absolute;left:728px;top:412px;width:60px;height:21px;background:#fff;border:1px solid #7a7a7a;box-sizing:border-box"></div><span class="t" style="left:731px;top:414px;height:16px;line-height:16px;font-size:11px;font-weight:400;color:#000;letter-spacing:0.03px;">-0.25%</span><div style="position:absolute;left:771px;top:414px;width:15px;height:8px;background:#e9e9e9;border:1px solid #a8a8a8;border-top-color:#f2f2f2;border-left-color:#f2f2f2;box-sizing:border-box"></div><svg style="position:absolute;left:775px;top:416px;" width="7" height="4" viewBox="0 0 7 4"><path d="M0 3.5h6L3 0.5z" fill="#000"/></svg><div style="position:absolute;left:771px;top:423px;width:15px;height:8px;background:#e9e9e9;border:1px solid #a8a8a8;border-top-color:#f2f2f2;border-left-color:#f2f2f2;box-sizing:border-box"></div><svg style="position:absolute;left:775px;top:425px;" width="7" height="4" viewBox="0 0 7 4"><path d="M0 0.5h6L3 3.5z" fill="#000"/></svg><div style="position:absolute;left:728px;top:442px;width:60px;height:21px;background:#fff;border:1px solid #0078d7;box-sizing:border-box"></div><span class="t" style="left:731px;top:444px;height:16px;line-height:16px;font-size:11px;font-weight:400;color:#000;letter-spacing:0.45px;">1.20%</span><div style="position:absolute;left:771px;top:444px;width:15px;height:8px;background:#e9e9e9;border:1px solid #a8a8a8;border-top-color:#f2f2f2;border-left-color:#f2f2f2;box-sizing:border-box"></div><svg style="position:absolute;left:775px;top:446px;" width="7" height="4" viewBox="0 0 7 4"><path d="M0 3.5h6L3 0.5z" fill="#000"/></svg><div style="position:absolute;left:771px;top:453px;width:15px;height:8px;background:#e9e9e9;border:1px solid #a8a8a8;border-top-color:#f2f2f2;border-left-color:#f2f2f2;box-sizing:border-box"></div><svg style="position:absolute;left:775px;top:455px;" width="7" height="4" viewBox="0 0 7 4"><path d="M0 0.5h6L3 3.5z" fill="#000"/></svg><div style="position:absolute;left:731px;top:446px;width:1px;height:13px;background:#000"></div><div style="position:absolute;left:810px;top:383px;width:121px;height:51px;border:1px solid #dcdcdc;box-sizing:border-box"></div><div style="position:absolute;left:818px;top:378px;width:98px;height:12px;background:#f5f5f5"></div><span class="t" style="left:820.4px;top:376px;height:16px;line-height:16px;font-size:11px;font-weight:400;color:#000;letter-spacing:-0.30px;">Berechnungsmodus</span><svg style="position:absolute;left:822px;top:397.2px;" width="13" height="13" viewBox="0 0 13 13"><circle cx="6.5" cy="6.5" r="5.9" fill="#fff" stroke="#222" stroke-width="1"/><circle cx="6.5" cy="6.5" r="3.4" fill="#222"/></svg><svg style="position:absolute;left:822px;top:414.8px;" width="13" height="13" viewBox="0 0 13 13"><circle cx="6.5" cy="6.5" r="5.9" fill="#fff" stroke="#222" stroke-width="1"/></svg><span class="t" style="left:837.6px;top:396px;height:16px;line-height:16px;font-size:11px;font-weight:400;color:#000;letter-spacing:-0.22px;"><u>R</u>endite</span><span class="t" style="left:837.6px;top:413.8px;height:16px;line-height:16px;font-size:11px;font-weight:400;color:#000;letter-spacing:-0.25px;"><u>K</u>urs bei Rendite</span><span class="t" style="left:809.2px;top:445.2px;height:16px;line-height:16px;font-size:11px;font-weight:400;color:#000;letter-spacing:-0.22px;">Kurs:</span><div style="position:absolute;left:858px;top:442px;width:74px;height:21px;background:#fff;border:1px solid #7a7a7a;box-sizing:border-box"></div><span class="t" style="left:861px;top:444px;height:16px;line-height:16px;font-size:11px;font-weight:400;color:#000;letter-spacing:-0.03px;">100.00</span><div style="position:absolute;left:915px;top:444px;width:15px;height:8px;background:#e9e9e9;border:1px solid #a8a8a8;border-top-color:#f2f2f2;border-left-color:#f2f2f2;box-sizing:border-box"></div><svg style="position:absolute;left:919px;top:446px;" width="7" height="4" viewBox="0 0 7 4"><path d="M0 3.5h6L3 0.5z" fill="#000"/></svg><div style="position:absolute;left:915px;top:453px;width:15px;height:8px;background:#e9e9e9;border:1px solid #a8a8a8;border-top-color:#f2f2f2;border-left-color:#f2f2f2;box-sizing:border-box"></div><svg style="position:absolute;left:919px;top:455px;" width="7" height="4" viewBox="0 0 7 4"><path d="M0 0.5h6L3 3.5z" fill="#000"/></svg><div style="position:absolute;left:955px;top:441px;width:88px;height:22px;background:#e1e1e1;border:2px solid #0078d7;box-sizing:border-box"></div><span class="t" style="left:984px;top:444.5px;height:16px;line-height:16px;font-size:11px;font-weight:400;color:#000;letter-spacing:-0.28px;">Berechnen</span><svg style="position:absolute;left:965px;top:445.6px;" width="15" height="13" viewBox="0 0 15 13">
<path d="M7.2 2.4Q5.2 2.2 5.2 4V6H7.4L3.9 10.2L0.4 6H2.6V3.6Q2.6 0.2 7.2 0.4z" fill="#3a68c8"/>
<path d="M7.4 10.6Q9.4 10.8 9.4 9V7H7.2L10.7 2.8L14.2 7H12V9.4Q12 12.8 7.4 12.6z" fill="#3a68c8"/></svg><div style="position:absolute;left:384px;top:478px;width:661px;height:181px;background:#fff;border:1px solid #a0a0a0;box-sizing:border-box"></div><div style="position:absolute;left:385px;top:479px;width:659px;height:18px;background:#d5d5d5"></div><span class="t" style="left:682.5px;top:480px;height:16px;line-height:16px;font-size:11.5px;font-weight:700;color:#000;letter-spacing:-0.01px;">Kennzahlen</span><span class="t" style="left:408px;top:507px;height:16px;line-height:16px;font-size:11.5px;font-weight:700;color:#000;letter-spacing:-0.57px;">Kurs</span><span class="t" style="left:539.8px;top:507px;height:16px;line-height:16px;font-size:11px;font-weight:400;color:#000;letter-spacing:0.01px;">100.00</span><span class="t" style="left:695.9px;top:507px;height:16px;line-height:16px;font-size:11.5px;font-weight:700;color:#000;letter-spacing:0.32px;">Restlaufzeit</span><span class="t" style="left:833.9px;top:507px;height:16px;line-height:16px;font-size:11px;font-weight:400;color:#000;letter-spacing:-0.06px;">7.08 Jahre</span><span class="t" style="left:408px;top:537px;height:16px;line-height:16px;font-size:11.5px;font-weight:700;color:#000;letter-spacing:0.30px;">Rendite</span><span class="t" style="left:539.8px;top:537px;height:16px;line-height:16px;font-size:11px;font-weight:400;color:#000;letter-spacing:0.28px;">6.497%</span><span class="t" style="left:695.9px;top:537px;height:16px;line-height:16px;font-size:11.5px;font-weight:700;color:#000;letter-spacing:0.26px;">Nachsteuerrendite</span><span class="t" style="left:833.9px;top:537px;height:16px;line-height:16px;font-size:11px;font-weight:400;color:#000;letter-spacing:0.30px;">4.873%</span><span class="t" style="left:408px;top:567px;height:16px;line-height:16px;font-size:11.5px;font-weight:700;color:#000;letter-spacing:0.17px;">Duration</span><span class="t" style="left:539.8px;top:567px;height:16px;line-height:16px;font-size:11px;font-weight:400;color:#000;letter-spacing:0.33px;">5.90</span><span class="t" style="left:695.9px;top:567px;height:16px;line-height:16px;font-size:11.5px;font-weight:700;color:#000;letter-spacing:0.08px;">Stückzinsen</span><span class="t" style="left:833.9px;top:567px;height:16px;line-height:16px;font-size:11px;font-weight:400;color:#000;letter-spacing:-0.01px;">5.9495</span><span class="t" style="left:408px;top:597px;height:16px;line-height:16px;font-size:11.5px;font-weight:700;color:#000;letter-spacing:0.12px;">Modified Duration</span><span class="t" style="left:539.8px;top:597px;height:16px;line-height:16px;font-size:11px;font-weight:400;color:#000;letter-spacing:0.42px;">5.91%</span><span class="t" style="left:695.9px;top:597px;height:16px;line-height:16px;font-size:11.5px;font-weight:700;color:#000;letter-spacing:0.23px;">Convexity</span><span class="t" style="left:833.9px;top:597px;height:16px;line-height:16px;font-size:11px;font-weight:400;color:#000;letter-spacing:-0.11px;">45.43</span><span class="t" style="left:408px;top:627px;height:16px;line-height:16px;font-size:11.5px;font-weight:700;color:#000;letter-spacing:0.08px;">Price Duration</span><span class="t" style="left:539.8px;top:627px;height:16px;line-height:16px;font-size:11px;font-weight:400;color:#000;letter-spacing:0.39px;">-7.10%</span><span class="t" style="left:695.9px;top:627px;height:16px;line-height:16px;font-size:11.5px;font-weight:700;color:#000;letter-spacing:0.11px;">Price Convexity</span><span class="t" style="left:833.9px;top:627px;height:16px;line-height:16px;font-size:11px;font-weight:400;color:#000;letter-spacing:0.35px;">-6.77%</span></div>
<div id="statusbar"><div style="position:absolute;left:0px;top:866px;width:1246px;height:18px;background:#f0f0f0"></div><div style="position:absolute;left:1px;top:866px;width:1244px;height:1px;background:#e6e6e6"></div><div style="position:absolute;left:0px;top:0px;width:1246px;height:884px;border:1px solid #fff;box-sizing:border-box"></div><div style="position:absolute;left:1057px;top:870.5px;width:10px;height:9.5px;background:#dc143c;border-radius:1px"></div><span class="t" style="left:1069.5px;top:867px;height:16px;line-height:16px;font-size:11px;font-weight:400;color:#000;letter-spacing:-0.17px;">Nicht mit Cloud-Services verbunden</span></div>
</body></html>
